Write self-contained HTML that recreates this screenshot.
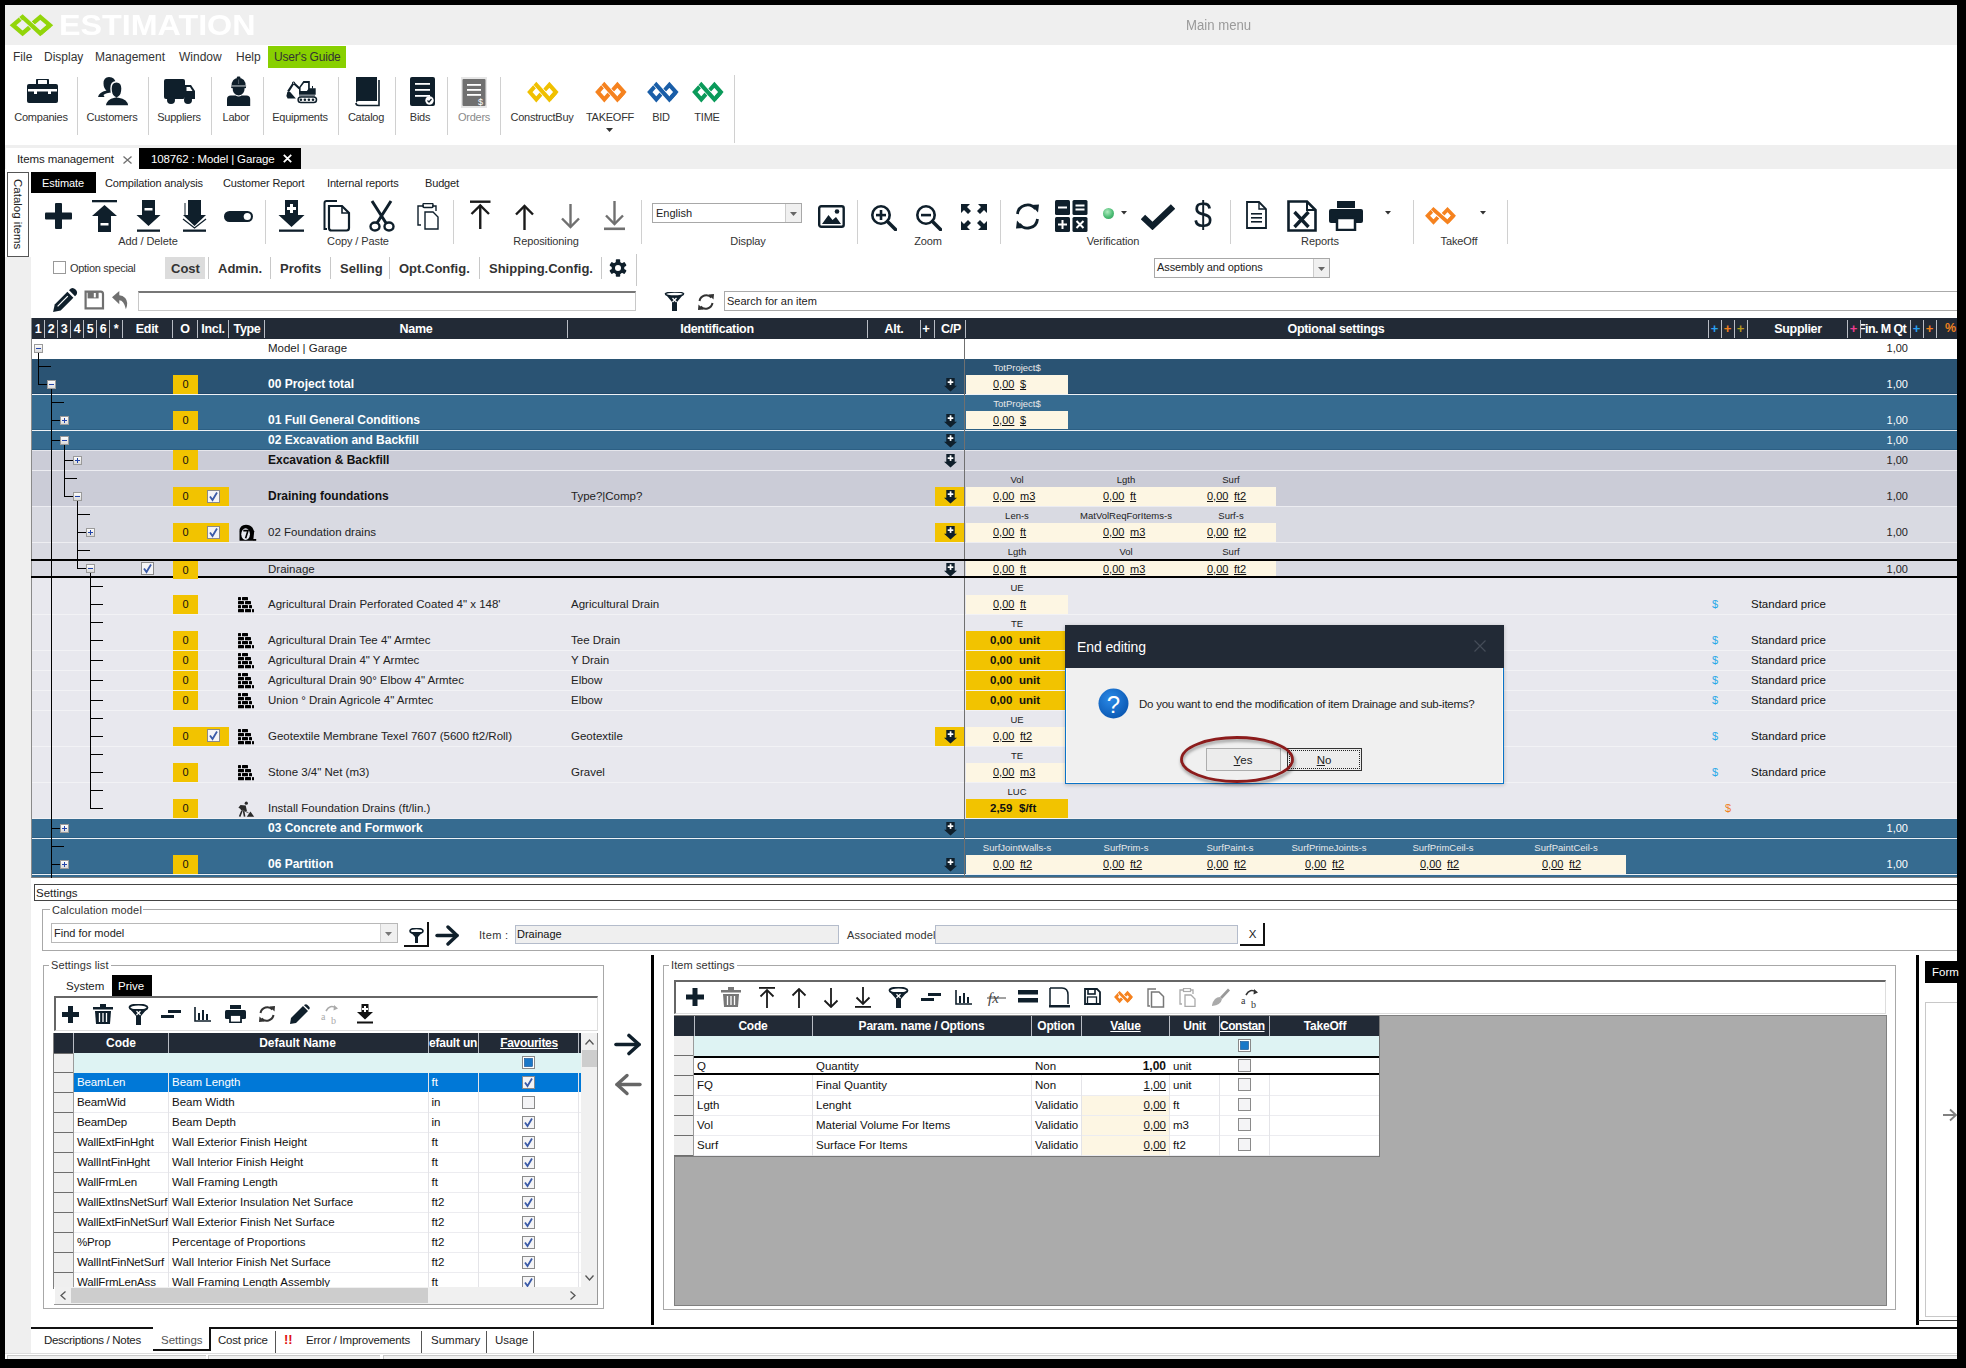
<!DOCTYPE html><html><head><meta charset="utf-8"><style>
html,body{margin:0;padding:0;}
body{width:1966px;height:1368px;background:#000;position:relative;overflow:hidden;font-family:"Liberation Sans",sans-serif;}
div,svg,span{position:absolute;box-sizing:border-box;}
u{text-decoration:underline;}
</style></head><body>
<div style="left:5px;top:5px;width:1952px;height:1354px;background:#fff;"></div>
<div style="left:5px;top:5px;width:1952px;height:40px;background:#efefef;"></div>
<svg style="left:7.700000000000001px;top:11.900000000000002px;" width="46.9" height="26.4" viewBox="0 0 46.9 26.4"><polyline points="12.20,7.06 5.01,13.20 14.60,21.39 21.79,15.25" stroke="#92d50a" stroke-width="4.3" stroke-linejoin="miter" stroke-miterlimit="10" fill="none"/><polyline points="32.30,21.39 41.89,13.20 32.30,5.01 25.11,11.15" stroke="#92d50a" stroke-width="4.3" stroke-linejoin="miter" stroke-miterlimit="10" fill="none"/><polyline points="12.68,6.65 14.60,5.01 32.30,21.39 34.22,19.75" stroke="#efefef" stroke-width="5.699999999999999" stroke-linejoin="miter" stroke-miterlimit="10" fill="none"/><polyline points="12.68,6.65 14.60,5.01 32.30,21.39 34.22,19.75" stroke="#92d50a" stroke-width="4.3" stroke-linejoin="miter" stroke-miterlimit="10" fill="none"/><polyline points="32.30,21.39 41.89,13.20" stroke="#92d50a" stroke-width="4.3" stroke-linejoin="miter" stroke-miterlimit="10" fill="none"/></svg>
<div style="left:59px;top:8px;height:34px;line-height:34px;font-size:30px;font-weight:bold;color:#fff;white-space:nowrap;transform:scaleX(1.075);transform-origin:0 0;">ESTIMATION</div>
<div style="left:1186px;top:15.5px;height:19px;line-height:19px;font-size:14px;color:#9a9a9a;font-weight:normal;white-space:nowrap;transform:scaleX(0.94);transform-origin:0 50%;">Main menu</div>
<div style="left:268px;top:46px;width:78px;height:22px;background:#88d000;"></div>
<div style="left:13px;top:49.0px;height:16px;line-height:16px;font-size:12px;color:#333;font-weight:normal;white-space:nowrap;">File</div>
<div style="left:44px;top:49.0px;height:16px;line-height:16px;font-size:12px;color:#333;font-weight:normal;white-space:nowrap;">Display</div>
<div style="left:95px;top:49.0px;height:16px;line-height:16px;font-size:12px;color:#333;font-weight:normal;white-space:nowrap;">Management</div>
<div style="left:179px;top:49.0px;height:16px;line-height:16px;font-size:12px;color:#333;font-weight:normal;white-space:nowrap;">Window</div>
<div style="left:236px;top:49.0px;height:16px;line-height:16px;font-size:12px;color:#333;font-weight:normal;white-space:nowrap;">Help</div>
<div style="left:274px;top:49.0px;height:16px;line-height:16px;font-size:12px;color:#333;font-weight:normal;white-space:nowrap;letter-spacing:-0.2px;">User's Guide</div>
<div style="left:77px;top:77px;width:1px;height:58px;background:#d0d0d0;"></div>
<div style="left:148px;top:77px;width:1px;height:58px;background:#d0d0d0;"></div>
<div style="left:211px;top:77px;width:1px;height:58px;background:#d0d0d0;"></div>
<div style="left:263px;top:77px;width:1px;height:58px;background:#d0d0d0;"></div>
<div style="left:338px;top:77px;width:1px;height:58px;background:#d0d0d0;"></div>
<div style="left:395px;top:77px;width:1px;height:58px;background:#d0d0d0;"></div>
<div style="left:447px;top:77px;width:1px;height:58px;background:#d0d0d0;"></div>
<div style="left:500px;top:77px;width:1px;height:58px;background:#d0d0d0;"></div>
<div style="left:734px;top:75px;width:1px;height:68px;background:#d0d0d0;"></div>
<div style="left:-19.0px;top:109.9px;width:120px;text-align:center;height:15px;line-height:15px;font-size:11px;color:#333;font-weight:normal;white-space:nowrap;letter-spacing:-0.25px;">Companies</div>
<div style="left:52.0px;top:109.9px;width:120px;text-align:center;height:15px;line-height:15px;font-size:11px;color:#333;font-weight:normal;white-space:nowrap;letter-spacing:-0.25px;">Customers</div>
<div style="left:119.0px;top:109.9px;width:120px;text-align:center;height:15px;line-height:15px;font-size:11px;color:#333;font-weight:normal;white-space:nowrap;letter-spacing:-0.25px;">Suppliers</div>
<div style="left:176.0px;top:109.9px;width:120px;text-align:center;height:15px;line-height:15px;font-size:11px;color:#333;font-weight:normal;white-space:nowrap;letter-spacing:-0.25px;">Labor</div>
<div style="left:240.0px;top:109.9px;width:120px;text-align:center;height:15px;line-height:15px;font-size:11px;color:#333;font-weight:normal;white-space:nowrap;letter-spacing:-0.25px;">Equipments</div>
<div style="left:306.0px;top:109.9px;width:120px;text-align:center;height:15px;line-height:15px;font-size:11px;color:#333;font-weight:normal;white-space:nowrap;letter-spacing:-0.25px;">Catalog</div>
<div style="left:360.0px;top:109.9px;width:120px;text-align:center;height:15px;line-height:15px;font-size:11px;color:#333;font-weight:normal;white-space:nowrap;letter-spacing:-0.25px;">Bids</div>
<div style="left:414.0px;top:109.9px;width:120px;text-align:center;height:15px;line-height:15px;font-size:11px;color:#8a8a8a;font-weight:normal;white-space:nowrap;letter-spacing:-0.25px;">Orders</div>
<div style="left:482.0px;top:109.9px;width:120px;text-align:center;height:15px;line-height:15px;font-size:11px;color:#333;font-weight:normal;white-space:nowrap;letter-spacing:-0.25px;">ConstructBuy</div>
<div style="left:550.0px;top:109.9px;width:120px;text-align:center;height:15px;line-height:15px;font-size:11px;color:#333;font-weight:normal;white-space:nowrap;letter-spacing:-0.25px;">TAKEOFF</div>
<div style="left:601.0px;top:109.9px;width:120px;text-align:center;height:15px;line-height:15px;font-size:11px;color:#333;font-weight:normal;white-space:nowrap;letter-spacing:-0.25px;">BID</div>
<div style="left:647.0px;top:109.9px;width:120px;text-align:center;height:15px;line-height:15px;font-size:11px;color:#333;font-weight:normal;white-space:nowrap;letter-spacing:-0.25px;">TIME</div>
<svg style="left:27px;top:79px;" width="32" height="25" viewBox="0 0 32 25"><rect x="0" y="5" width="31" height="19" rx="2" fill="#0f1f2b"/><rect x="10" y="0" width="11" height="6" rx="1.5" fill="none" stroke="#0f1f2b" stroke-width="2"/><rect x="1" y="10" width="29" height="2.5" fill="#fff"/><rect x="7" y="10" width="3" height="5" fill="#fff"/><rect x="21" y="10" width="3" height="5" fill="#fff"/></svg>
<svg style="left:97px;top:76px;" width="34" height="30" viewBox="0 0 34 30"><path d="M12 1 Q18.5 1 18.5 7.5 Q18 13 15 15.5 L15 16.5 Q9 16.5 6.5 19 L7.5 21 L1 21 Q2 16 9.5 14.5 Q6.5 12 6.5 7.5 Q6.5 1 12 1Z" fill="#0f1f2b"/><path d="M19.5 5.8 Q25 5.8 25 12.5 Q25 19 21.5 21 Q31.5 22.5 32 30 L8 30 Q9 22.5 17.5 21 Q14 19 14 12.5 Q14 5.8 19.5 5.8Z" fill="#0f1f2b" stroke="#fff" stroke-width="1.4"/></svg>
<svg style="left:164px;top:79px;" width="32" height="26" viewBox="0 0 32 26"><rect x="0" y="0" width="21" height="20" rx="2" fill="#0f1f2b"/><path d="M21 6 L27 6 L31 12 L31 20 L21 20Z" fill="#0f1f2b"/><path d="M22.5 8 L26 8 L28.5 12 L22.5 12Z" fill="#fff"/><circle cx="7" cy="21" r="4" fill="#0f1f2b"/><circle cx="24" cy="21" r="4" fill="#0f1f2b"/></svg>
<svg style="left:226px;top:76px;" width="25" height="31" viewBox="0 0 25 31"><path d="M5.6 10 Q5.6 2.2 12.6 1.8 Q19.6 2.2 19.6 10 Z" fill="#0f1f2b"/><rect x="10.8" y="0.6" width="3.6" height="2.4" rx="1" fill="#0f1f2b"/><path d="M12.6 3.5 L12.6 8" stroke="#5d6872" stroke-width="0.9"/><rect x="5" y="9.2" width="15.2" height="1.3" fill="#8f989f"/><rect x="5.2" y="10.5" width="14.8" height="1.6" fill="#0f1f2b"/><path d="M6.6 12 L18.6 12 Q18.6 19 12.6 19.4 Q6.6 19 6.6 12Z" fill="#0f1f2b"/><path d="M1 30 L1 23.2 Q1 19.6 4.8 19.6 L9.6 19.6 Q12.6 21.6 15.6 19.6 L20.4 19.6 Q24.2 19.6 24.2 23.2 L24.2 30Z" fill="#0f1f2b"/></svg>
<svg style="left:280px;top:72px;" width="40" height="34" viewBox="0 0 40 34"><path d="M19 15.2 L23.4 9.1 L29.8 9.1 L29.8 16.2 L35.7 16.2 L35.7 22.8 L19 22.8Z M20.6 15.4 L20.6 19 L26.9 19 L28.1 17.3 L28.1 11 L24 11Z" fill="#0f1f2b" fill-rule="evenodd"/><path d="M19.5 16.5 L13.6 11 L8.1 19.6" fill="none" stroke="#0f1f2b" stroke-width="2.2" stroke-linejoin="round"/><circle cx="13.6" cy="11.1" r="1.6" fill="#0f1f2b"/><circle cx="13.6" cy="11.1" r="0.7" fill="#fff"/><path d="M6.4 24 L7.3 19.9 L10.2 19.9 L15.9 26.5 L7.6 26.6Z" fill="#0f1f2b"/><rect x="19" y="23.2" width="16" height="1.3" fill="#5a6570"/><rect x="18.1" y="25" width="18.4" height="5.6" rx="2.8" fill="none" stroke="#0f1f2b" stroke-width="1.5"/><circle cx="20.9" cy="27.8" r="1.3" fill="#0f1f2b"/><circle cx="24.9" cy="27.8" r="1.3" fill="#0f1f2b"/><circle cx="28.9" cy="27.8" r="1.3" fill="#0f1f2b"/><circle cx="33" cy="27.8" r="1.3" fill="#0f1f2b"/><rect x="32" y="14" width="1" height="2.5" fill="#0f1f2b"/></svg>
<svg style="left:354px;top:77px;" width="26" height="30" viewBox="0 0 26 30"><path d="M2 0 L23 0 L23 24 L5 24 Q2 24 2 27 Z" fill="#0f1f2b"/><path d="M2 26 Q2 28.5 5 28.5 L25 28.5 L25 3" fill="none" stroke="#0f1f2b" stroke-width="1.6"/></svg>
<svg style="left:410px;top:77px;" width="26" height="30" viewBox="0 0 26 30"><rect x="0" y="0" width="25" height="29" rx="2" fill="#0f1f2b"/><rect x="5" y="6" width="15" height="1.8" fill="#fff"/><rect x="5" y="12" width="15" height="1.8" fill="#fff"/><rect x="5" y="18" width="15" height="1.8" fill="#fff"/><circle cx="19.5" cy="23.5" r="4.2" fill="#fff"/><path d="M17.5 23.5 L19 25 L21.5 22" stroke="#0f1f2b" stroke-width="1.2" fill="none"/></svg>
<svg style="left:461px;top:76.5px;" width="26" height="32" viewBox="0 0 26 32"><rect x="0" y="0" width="26" height="31" fill="#e6e6e6"/><rect x="1.5" y="2" width="23" height="27" rx="1" fill="#707070"/><rect x="6" y="7" width="14" height="1.8" fill="#fff"/><rect x="6" y="12" width="14" height="1.8" fill="#fff"/><rect x="6" y="17" width="14" height="1.8" fill="#fff"/><text x="17" y="28" font-size="9" fill="#fff" font-family="Liberation Sans">$</text></svg>
<svg style="left:525.3000000000001px;top:79.80000000000001px;" width="35.7" height="24.2" viewBox="0 0 35.7 24.2"><polyline points="9.67,6.62 4.80,12.10 11.30,19.40 16.17,13.92" stroke="#f0c000" stroke-width="4.0" stroke-linejoin="miter" stroke-miterlimit="10" fill="none"/><polyline points="24.40,19.40 30.90,12.10 24.40,4.80 19.52,10.27" stroke="#f0c000" stroke-width="4.0" stroke-linejoin="miter" stroke-miterlimit="10" fill="none"/><polyline points="10.00,6.26 11.30,4.80 24.40,19.40 25.70,17.94" stroke="#fff" stroke-width="5.4" stroke-linejoin="miter" stroke-miterlimit="10" fill="none"/><polyline points="10.00,6.26 11.30,4.80 24.40,19.40 25.70,17.94" stroke="#f0c000" stroke-width="4.0" stroke-linejoin="miter" stroke-miterlimit="10" fill="none"/><polyline points="24.40,19.40 30.90,12.10" stroke="#f0c000" stroke-width="4.0" stroke-linejoin="miter" stroke-miterlimit="10" fill="none"/></svg>
<svg style="left:593.2px;top:79.80000000000001px;" width="35.7" height="24.2" viewBox="0 0 35.7 24.2"><polyline points="9.67,6.62 4.80,12.10 11.30,19.40 16.17,13.92" stroke="#f5821f" stroke-width="4.0" stroke-linejoin="miter" stroke-miterlimit="10" fill="none"/><polyline points="24.40,19.40 30.90,12.10 24.40,4.80 19.52,10.27" stroke="#f5821f" stroke-width="4.0" stroke-linejoin="miter" stroke-miterlimit="10" fill="none"/><polyline points="10.00,6.26 11.30,4.80 24.40,19.40 25.70,17.94" stroke="#fff" stroke-width="5.4" stroke-linejoin="miter" stroke-miterlimit="10" fill="none"/><polyline points="10.00,6.26 11.30,4.80 24.40,19.40 25.70,17.94" stroke="#f5821f" stroke-width="4.0" stroke-linejoin="miter" stroke-miterlimit="10" fill="none"/><polyline points="24.40,19.40 30.90,12.10" stroke="#f5821f" stroke-width="4.0" stroke-linejoin="miter" stroke-miterlimit="10" fill="none"/></svg>
<svg style="left:645.0px;top:79.80000000000001px;" width="35.7" height="24.2" viewBox="0 0 35.7 24.2"><polyline points="9.67,6.62 4.80,12.10 11.30,19.40 16.17,13.92" stroke="#1a5ea8" stroke-width="4.0" stroke-linejoin="miter" stroke-miterlimit="10" fill="none"/><polyline points="24.40,19.40 30.90,12.10 24.40,4.80 19.52,10.27" stroke="#1a5ea8" stroke-width="4.0" stroke-linejoin="miter" stroke-miterlimit="10" fill="none"/><polyline points="10.00,6.26 11.30,4.80 24.40,19.40 25.70,17.94" stroke="#fff" stroke-width="5.4" stroke-linejoin="miter" stroke-miterlimit="10" fill="none"/><polyline points="10.00,6.26 11.30,4.80 24.40,19.40 25.70,17.94" stroke="#1a5ea8" stroke-width="4.0" stroke-linejoin="miter" stroke-miterlimit="10" fill="none"/><polyline points="24.40,19.40 30.90,12.10" stroke="#1a5ea8" stroke-width="4.0" stroke-linejoin="miter" stroke-miterlimit="10" fill="none"/></svg>
<svg style="left:690.1px;top:79.80000000000001px;" width="35.7" height="24.2" viewBox="0 0 35.7 24.2"><polyline points="9.67,6.62 4.80,12.10 11.30,19.40 16.17,13.92" stroke="#0a9a5a" stroke-width="4.0" stroke-linejoin="miter" stroke-miterlimit="10" fill="none"/><polyline points="24.40,19.40 30.90,12.10 24.40,4.80 19.52,10.27" stroke="#0a9a5a" stroke-width="4.0" stroke-linejoin="miter" stroke-miterlimit="10" fill="none"/><polyline points="10.00,6.26 11.30,4.80 24.40,19.40 25.70,17.94" stroke="#fff" stroke-width="5.4" stroke-linejoin="miter" stroke-miterlimit="10" fill="none"/><polyline points="10.00,6.26 11.30,4.80 24.40,19.40 25.70,17.94" stroke="#0a9a5a" stroke-width="4.0" stroke-linejoin="miter" stroke-miterlimit="10" fill="none"/><polyline points="24.40,19.40 30.90,12.10" stroke="#0a9a5a" stroke-width="4.0" stroke-linejoin="miter" stroke-miterlimit="10" fill="none"/></svg>
<svg style="left:606px;top:128px;" width="7" height="4" viewBox="0 0 7 4"><path d="M0 0 L7 0 L3.5 4Z" fill="#333"/></svg>
<div style="left:5px;top:145px;width:1952px;height:24px;background:#efefef;"></div>
<div style="left:6px;top:148px;width:133px;height:21px;background:#fff;"></div>
<div style="left:17px;top:151.0px;height:16px;line-height:16px;font-size:11.5px;color:#222;font-weight:normal;white-space:nowrap;letter-spacing:-0.1px;">Items management</div>
<svg style="left:123px;top:156px;" width="9" height="8" viewBox="0 0 9 8"><path d="M0.5 0.5 L8.5 7.5 M8.5 0.5 L0.5 7.5" stroke="#707070" stroke-width="1.3"/></svg>
<div style="left:139px;top:148px;width:162px;height:21px;background:#000;"></div>
<div style="left:151px;top:151.0px;height:16px;line-height:16px;font-size:11.5px;color:#fff;font-weight:normal;white-space:nowrap;letter-spacing:-0.15px;">108762 : Model | Garage</div>
<svg style="left:283px;top:154px;" width="9" height="9" viewBox="0 0 9 9"><path d="M0.8 0.8 L8.2 8.2 M8.2 0.8 L0.8 8.2" stroke="#fff" stroke-width="1.8"/></svg>
<div style="left:5px;top:257px;width:26px;height:1096px;background:#efefef;"></div>
<div style="left:7px;top:172px;width:22px;height:85px;background:#fff;border:1px solid #555;"></div>
<div style="left:8px;top:174px;width:20px;height:80px;"><div style="left:0;top:0;width:80px;height:20px;line-height:20px;font-size:11.5px;color:#222;white-space:nowrap;transform-origin:0 0;transform:translate(20px,5px) rotate(90deg);">Catalog items</div></div>
<div style="left:31px;top:172px;width:65px;height:21px;background:#000;"></div>
<div style="left:42px;top:175.5px;height:15px;line-height:15px;font-size:11px;color:#fff;font-weight:normal;white-space:nowrap;letter-spacing:-0.1px;">Estimate</div>
<div style="left:105px;top:175.5px;height:15px;line-height:15px;font-size:11px;color:#222;font-weight:normal;white-space:nowrap;letter-spacing:-0.15px;">Compilation analysis</div>
<div style="left:223px;top:175.5px;height:15px;line-height:15px;font-size:11px;color:#222;font-weight:normal;white-space:nowrap;letter-spacing:-0.15px;">Customer Report</div>
<div style="left:327px;top:175.5px;height:15px;line-height:15px;font-size:11px;color:#222;font-weight:normal;white-space:nowrap;letter-spacing:-0.15px;">Internal reports</div>
<div style="left:425px;top:175.5px;height:15px;line-height:15px;font-size:11px;color:#222;font-weight:normal;white-space:nowrap;letter-spacing:-0.15px;">Budget</div>
<div style="left:265px;top:200px;width:1px;height:44px;background:#d0d0d0;"></div>
<div style="left:453px;top:200px;width:1px;height:44px;background:#d0d0d0;"></div>
<div style="left:641px;top:200px;width:1px;height:44px;background:#d0d0d0;"></div>
<div style="left:857px;top:200px;width:1px;height:44px;background:#d0d0d0;"></div>
<div style="left:1000px;top:200px;width:1px;height:44px;background:#d0d0d0;"></div>
<div style="left:1230px;top:200px;width:1px;height:44px;background:#d0d0d0;"></div>
<div style="left:1413px;top:200px;width:1px;height:44px;background:#d0d0d0;"></div>
<div style="left:1507px;top:200px;width:1px;height:44px;background:#d0d0d0;"></div>
<div style="left:78.0px;top:233.5px;width:140px;text-align:center;height:15px;line-height:15px;font-size:11px;color:#333;font-weight:normal;white-space:nowrap;letter-spacing:-0.1px;">Add / Delete</div>
<div style="left:288.0px;top:233.5px;width:140px;text-align:center;height:15px;line-height:15px;font-size:11px;color:#333;font-weight:normal;white-space:nowrap;letter-spacing:-0.1px;">Copy / Paste</div>
<div style="left:476.0px;top:233.5px;width:140px;text-align:center;height:15px;line-height:15px;font-size:11px;color:#333;font-weight:normal;white-space:nowrap;letter-spacing:-0.1px;">Repositioning</div>
<div style="left:678.0px;top:233.5px;width:140px;text-align:center;height:15px;line-height:15px;font-size:11px;color:#333;font-weight:normal;white-space:nowrap;letter-spacing:-0.1px;">Display</div>
<div style="left:858.0px;top:233.5px;width:140px;text-align:center;height:15px;line-height:15px;font-size:11px;color:#333;font-weight:normal;white-space:nowrap;letter-spacing:-0.1px;">Zoom</div>
<div style="left:1043.0px;top:233.5px;width:140px;text-align:center;height:15px;line-height:15px;font-size:11px;color:#333;font-weight:normal;white-space:nowrap;letter-spacing:-0.1px;">Verification</div>
<div style="left:1250.0px;top:233.5px;width:140px;text-align:center;height:15px;line-height:15px;font-size:11px;color:#333;font-weight:normal;white-space:nowrap;letter-spacing:-0.1px;">Reports</div>
<div style="left:1389.0px;top:233.5px;width:140px;text-align:center;height:15px;line-height:15px;font-size:11px;color:#333;font-weight:normal;white-space:nowrap;letter-spacing:-0.1px;">TakeOff</div>
<svg style="left:45px;top:203px;" width="27" height="26" viewBox="0 0 27 26"><rect x="0" y="9.5" width="27" height="7" rx="1" fill="#0f1f2b"/><rect x="10" y="0" width="7" height="26" rx="1" fill="#0f1f2b"/></svg>
<svg style="left:92px;top:200px;" width="25" height="32" viewBox="0 0 25 32"><rect x="0" y="0" width="25" height="2.3" fill="#0f1f2b"/><path d="M12.5 5 L25 16 L19 16 L19 32 L6 32 L6 16 L0 16Z" fill="#0f1f2b"/><rect x="8.5" y="23" width="8" height="2.5" fill="#fff"/></svg>
<svg style="left:136px;top:200px;" width="25" height="32" viewBox="0 0 25 32"><path d="M6 0 L19 0 L19 15 L24.5 15 L12.5 26 L0.5 15 L6 15Z" fill="#0f1f2b"/><rect x="8.5" y="8" width="8" height="2.5" fill="#fff"/><rect x="1" y="29.5" width="23" height="2.3" fill="#0f1f2b"/></svg>
<svg style="left:182px;top:200px;" width="25" height="32" viewBox="0 0 25 32"><path d="M6 0 L19 0 L19 15 L24 15 L12.5 26 L1 15 L6 15Z" fill="#0f1f2b"/><path d="M1 19 L12.5 28 L24 19" fill="none" stroke="#0f1f2b" stroke-width="1.3"/><path d="M3 3 L3 16" stroke="#0f1f2b" stroke-width="1"/><rect x="1" y="29.5" width="23" height="2.3" fill="#0f1f2b"/></svg>
<svg style="left:224px;top:211px;" width="30" height="12" viewBox="0 0 30 12"><rect x="0" y="0" width="29" height="11" rx="5.5" fill="#0f1f2b"/><circle cx="23.3" cy="5.5" r="3.6" fill="#fff"/></svg>
<svg style="left:278px;top:200px;" width="27" height="32" viewBox="0 0 27 32"><path d="M7 0 L20 0 L20 15 L26.5 15 L13.5 27 L0.5 15 L7 15Z" fill="#0f1f2b"/><rect x="12" y="4" width="3" height="9" fill="#fff"/><rect x="9" y="7" width="9" height="3" fill="#fff"/><rect x="1" y="29.5" width="25" height="2.3" fill="#0f1f2b"/></svg>
<svg style="left:323px;top:200px;" width="28" height="32" viewBox="0 0 28 32"><path d="M4 29 L1.5 29 L1.5 3 Q1.5 1 3.5 1 L14 1" fill="none" stroke="#0f1f2b" stroke-width="2"/><path d="M6 6 L19 6 L26 13 L26 28 Q26 30.5 23.5 30.5 L8.5 30.5 Q6 30.5 6 28Z" fill="none" stroke="#0f1f2b" stroke-width="2.2"/><path d="M19 6 L19 13 L26 13" fill="none" stroke="#0f1f2b" stroke-width="1.6"/></svg>
<svg style="left:368px;top:200px;" width="28" height="32" viewBox="0 0 28 32"><path d="M4 1 L18 23 M23 1 L9 23" stroke="#0f1f2b" stroke-width="3" fill="none"/><ellipse cx="7" cy="26.5" rx="4.5" ry="4" fill="none" stroke="#0f1f2b" stroke-width="2.4"/><ellipse cx="21" cy="26.5" rx="4.5" ry="4" fill="none" stroke="#0f1f2b" stroke-width="2.4"/></svg>
<svg style="left:417px;top:203px;" width="23" height="27" viewBox="0 0 23 27"><path d="M4 22 L1 22 L1 3 L7 3 M15 3 L19 3 L19 8" fill="none" stroke="#0f1f2b" stroke-width="1.4"/><rect x="6" y="0.5" width="10" height="4" rx="1" fill="none" stroke="#0f1f2b" stroke-width="1.4"/><path d="M8 9 L16 9 L21 14 L21 26 L8 26Z" fill="none" stroke="#0f1f2b" stroke-width="1.4"/></svg>
<svg style="left:470px;top:200px;" width="21" height="30" viewBox="0 0 21 30"><rect x="0" y="0.5" width="20.5" height="2.4" fill="#1a1a1a"/><path d="M10.25 5 L10.25 29" stroke="#1a1a1a" stroke-width="2.4"/><path d="M1.5 14 L10.25 5.5 L19 14" fill="none" stroke="#1a1a1a" stroke-width="2.4"/></svg>
<svg style="left:515px;top:204px;" width="20" height="26" viewBox="0 0 20 26"><path d="M9.5 2 L9.5 26" stroke="#1a1a1a" stroke-width="2.4"/><path d="M1 10.5 L9.5 2 L18 10.5" fill="none" stroke="#1a1a1a" stroke-width="2.4"/></svg>
<svg style="left:561px;top:204px;" width="20" height="26" viewBox="0 0 20 26"><path d="M9.5 0 L9.5 23" stroke="#707070" stroke-width="2.4"/><path d="M1 14.5 L9.5 23 L18 14.5" fill="none" stroke="#707070" stroke-width="2.4"/></svg>
<svg style="left:604px;top:201px;" width="22" height="30" viewBox="0 0 22 30"><path d="M10.5 0 L10.5 23" stroke="#707070" stroke-width="2.4"/><path d="M2 14.5 L10.5 23 L19 14.5" fill="none" stroke="#707070" stroke-width="2.4"/><rect x="0" y="26.5" width="21" height="2.6" fill="#707070"/></svg>
<div style="left:652px;top:203px;width:150px;height:20px;background:#fff;border:1px solid #a8a8a8;"></div>
<div style="left:785px;top:204px;width:16px;height:18px;background:#f0f0f0;border-left:1px solid #ccc;"></div>
<svg style="left:790px;top:212px;" width="7" height="4" viewBox="0 0 7 4"><path d="M0 0 L7 0 L3.5 4Z" fill="#666"/></svg>
<div style="left:656px;top:205.5px;height:15px;line-height:15px;font-size:11px;color:#222;font-weight:normal;white-space:nowrap;">English</div>
<svg style="left:818px;top:205px;" width="27" height="23" viewBox="0 0 27 23"><rect x="1.2" y="1.2" width="24.5" height="20.5" rx="2" fill="none" stroke="#0f1f2b" stroke-width="2.4"/><path d="M4 19 L10.5 10 L14.5 15 L18 12 L23 19Z" fill="#0f1f2b"/><circle cx="19" cy="6.5" r="2.3" fill="#0f1f2b"/></svg>
<svg style="left:870px;top:204px;" width="27" height="27" viewBox="0 0 27 27"><circle cx="11" cy="11" r="8.7" fill="none" stroke="#0f1f2b" stroke-width="2.6"/><path d="M17.5 17.5 L25.5 25.5" stroke="#0f1f2b" stroke-width="3.6" stroke-linecap="round"/><rect x="6" y="9.8" width="10" height="2.6" fill="#0f1f2b"/><rect x="9.7" y="6" width="2.6" height="10" fill="#0f1f2b"/></svg>
<svg style="left:915px;top:204px;" width="27" height="27" viewBox="0 0 27 27"><circle cx="11" cy="11" r="8.7" fill="none" stroke="#0f1f2b" stroke-width="2.6"/><path d="M17.5 17.5 L25.5 25.5" stroke="#0f1f2b" stroke-width="3.6" stroke-linecap="round"/><rect x="6" y="9.8" width="10" height="2.6" fill="#0f1f2b"/></svg>
<svg style="left:961px;top:204px;" width="27" height="26" viewBox="0 0 27 26"><g fill="#0f1f2b"><path d="M0 0 L9 0 L6 3 L10 7 L7 10 L3 6 L0 9Z"/><path d="M26 0 L17 0 L20 3 L16 7 L19 10 L23 6 L26 9Z"/><path d="M0 26 L9 26 L6 23 L10 19 L7 16 L3 20 L0 17Z"/><path d="M26 26 L17 26 L20 23 L16 19 L19 16 L23 20 L26 17Z"/></g></svg>
<svg style="left:1014px;top:203px;" width="27" height="27" viewBox="0 0 27 27"><path d="M3.5 11 A10 10 0 0 1 21.5 6" fill="none" stroke="#0f1f2b" stroke-width="2.8"/><path d="M17 2 L25 1.5 L24 9.5Z" fill="#0f1f2b"/><path d="M23.5 16 A10 10 0 0 1 5.5 21" fill="none" stroke="#0f1f2b" stroke-width="2.8"/><path d="M10 25 L2 25.5 L3 17.5Z" fill="#0f1f2b"/></svg>
<svg style="left:1055px;top:200px;" width="33" height="32" viewBox="0 0 33 32"><rect x="0" y="0" width="15" height="15" rx="1.5" fill="#0f1f2b"/><rect x="17.5" y="0" width="15" height="15" rx="1.5" fill="#0f1f2b"/><rect x="0" y="17" width="15" height="15" rx="1.5" fill="#0f1f2b"/><rect x="17.5" y="17" width="15" height="15" rx="1.5" fill="#0f1f2b"/><rect x="3" y="6.5" width="9" height="2" fill="#fff"/><rect x="20.5" y="4.5" width="9" height="2" fill="#fff"/><rect x="20.5" y="8.5" width="9" height="2" fill="#fff"/><rect x="3" y="23.5" width="9" height="2" fill="#fff"/><rect x="6.5" y="20" width="2" height="9" fill="#fff"/><path d="M21.5 21 L28.5 28 M28.5 21 L21.5 28" stroke="#fff" stroke-width="2"/></svg>
<div style="left:1103px;top:208px;width:11px;height:11px;border-radius:50%;background:radial-gradient(circle at 40% 35%,#b0ecc0,#4cbc74 55%,#2e9a58);"></div>
<svg style="left:1121px;top:211px;" width="6" height="4" viewBox="0 0 6 4"><path d="M0 0 L6 0 L3 3.5Z" fill="#333"/></svg>
<svg style="left:1141px;top:203px;" width="34" height="27" viewBox="0 0 34 27"><path d="M2 14 L11.5 23 L32 3.5" fill="none" stroke="#0f1f2b" stroke-width="6.2"/></svg>
<div style="left:1193px;top:191.0px;height:50px;line-height:50px;font-size:36px;color:#0f1f2b;font-weight:normal;white-space:nowrap;transform:scaleX(0.9);">$</div>
<svg style="left:1246px;top:201px;" width="21" height="28" viewBox="0 0 21 28"><path d="M1 1 L13 1 L20 8 L20 27 L1 27Z" fill="none" stroke="#0f1f2b" stroke-width="1.8"/><path d="M13 1 L13 8 L20 8" fill="none" stroke="#0f1f2b" stroke-width="1.4"/><rect x="5" y="12" width="11" height="1.6" fill="#0f1f2b"/><rect x="5" y="16" width="11" height="1.6" fill="#0f1f2b"/><rect x="5" y="20" width="11" height="1.6" fill="#0f1f2b"/></svg>
<svg style="left:1287px;top:200px;" width="30" height="32" viewBox="0 0 30 32"><path d="M1.5 1.5 L20 1.5 L28.5 10 L28.5 30.5 L1.5 30.5Z" fill="none" stroke="#0f1f2b" stroke-width="2.6"/><path d="M20 1.5 L20 10 L28.5 10" fill="none" stroke="#0f1f2b" stroke-width="2"/><path d="M7.5 12 L21.5 27 M21.5 12 L7.5 27" stroke="#0f1f2b" stroke-width="3.4"/></svg>
<svg style="left:1329px;top:201px;" width="34" height="30" viewBox="0 0 34 30"><rect x="8" y="0" width="18" height="7" fill="#0f1f2b"/><rect x="0" y="8" width="34" height="14" rx="2" fill="#0f1f2b"/><rect x="8" y="17" width="18" height="12" fill="#fff" stroke="#0f1f2b" stroke-width="2.5"/></svg>
<svg style="left:1385px;top:211px;" width="6" height="4" viewBox="0 0 6 4"><path d="M0 0 L6 0 L3 3.5Z" fill="#333"/></svg>
<svg style="left:1422.5px;top:205.0px;" width="35.0" height="21.6" viewBox="0 0 35.0 21.6"><polyline points="9.02,6.14 4.59,10.80 10.50,17.01 14.93,12.35" stroke="#f5821f" stroke-width="3.7" stroke-linejoin="miter" stroke-miterlimit="10" fill="none"/><polyline points="24.50,17.01 30.41,10.80 24.50,4.59 20.07,9.25" stroke="#f5821f" stroke-width="3.7" stroke-linejoin="miter" stroke-miterlimit="10" fill="none"/><polyline points="9.32,5.83 10.50,4.59 24.50,17.01 25.68,15.77" stroke="#fff" stroke-width="5.1" stroke-linejoin="miter" stroke-miterlimit="10" fill="none"/><polyline points="9.32,5.83 10.50,4.59 24.50,17.01 25.68,15.77" stroke="#f5821f" stroke-width="3.7" stroke-linejoin="miter" stroke-miterlimit="10" fill="none"/><polyline points="24.50,17.01 30.41,10.80" stroke="#f5821f" stroke-width="3.7" stroke-linejoin="miter" stroke-miterlimit="10" fill="none"/></svg>
<svg style="left:1480px;top:211px;" width="6" height="4" viewBox="0 0 6 4"><path d="M0 0 L6 0 L3 3.5Z" fill="#333"/></svg>
<div style="left:53px;top:261px;width:13px;height:13px;background:#fff;border:1px solid #999;"></div>
<div style="left:70px;top:260.5px;height:15px;line-height:15px;font-size:11px;color:#333;font-weight:normal;white-space:nowrap;letter-spacing:-0.3px;">Option special</div>
<div style="left:165px;top:257px;width:40px;height:22px;background:#dcdcdc;"></div>
<div style="left:171px;top:260.0px;height:18px;line-height:18px;font-size:13px;color:#333;font-weight:bold;white-space:nowrap;">Cost</div>
<div style="left:218px;top:260.0px;height:18px;line-height:18px;font-size:13px;color:#333;font-weight:bold;white-space:nowrap;">Admin.</div>
<div style="left:280px;top:260.0px;height:18px;line-height:18px;font-size:13px;color:#333;font-weight:bold;white-space:nowrap;">Profits</div>
<div style="left:340px;top:260.0px;height:18px;line-height:18px;font-size:13px;color:#333;font-weight:bold;white-space:nowrap;">Selling</div>
<div style="left:399px;top:260.0px;height:18px;line-height:18px;font-size:13px;color:#333;font-weight:bold;white-space:nowrap;">Opt.Config.</div>
<div style="left:489px;top:260.0px;height:18px;line-height:18px;font-size:13px;color:#333;font-weight:bold;white-space:nowrap;">Shipping.Config.</div>
<div style="left:208px;top:257px;width:1px;height:22px;background:#c8c8c8;"></div>
<div style="left:270px;top:257px;width:1px;height:22px;background:#c8c8c8;"></div>
<div style="left:330px;top:257px;width:1px;height:22px;background:#c8c8c8;"></div>
<div style="left:389px;top:257px;width:1px;height:22px;background:#c8c8c8;"></div>
<div style="left:479px;top:257px;width:1px;height:22px;background:#c8c8c8;"></div>
<div style="left:601px;top:257px;width:1px;height:22px;background:#c8c8c8;"></div>
<div style="left:636px;top:254px;width:1px;height:32px;background:#c8c8c8;"></div>
<svg style="left:609px;top:259px;" width="18" height="18" viewBox="0 0 18 18"><g fill="#0f1f2b"><circle cx="9" cy="9" r="6.3"/><rect x="6.8" y="0.3" width="4.4" height="17.4" rx="0.8" transform="rotate(0 9 9)"/><rect x="6.8" y="0.3" width="4.4" height="17.4" rx="0.8" transform="rotate(60 9 9)"/><rect x="6.8" y="0.3" width="4.4" height="17.4" rx="0.8" transform="rotate(120 9 9)"/></g><circle cx="9" cy="9" r="3" fill="#fff"/></svg>
<div style="left:1154px;top:258px;width:176px;height:20px;background:#fff;border:1px solid #a8a8a8;"></div>
<div style="left:1313px;top:259px;width:16px;height:18px;background:#f0f0f0;border-left:1px solid #ccc;"></div>
<svg style="left:1318px;top:267px;" width="7" height="4" viewBox="0 0 7 4"><path d="M0 0 L7 0 L3.5 4Z" fill="#666"/></svg>
<div style="left:1157px;top:260.0px;height:15px;line-height:15px;font-size:11px;color:#222;font-weight:normal;white-space:nowrap;letter-spacing:-0.1px;">Assembly and options</div>
<svg style="left:52px;top:287px;" width="27" height="27" viewBox="0 0 27 27"><path d="M1.1 25 L2.7 17.4 L15.4 4.8 L21.4 10.8 L8.7 23.4Z" fill="#0f1f2b"/><path d="M17.2 2.9 Q20.4 -0.6 23.6 2.6 Q26.8 5.8 23.3 9 L23 9.2 L16.9 3.1Z" fill="#0f1f2b"/><path d="M5.6 19.3 L15.8 9.1" stroke="#fff" stroke-width="1.2"/></svg>
<svg style="left:84px;top:290px;" width="21" height="20" viewBox="0 0 21 20"><path d="M1.6 1.6 L16.8 1.6 Q19 1.6 19 4 L19 18.4 L1.6 18.4Z" fill="none" stroke="#707070" stroke-width="2.2"/><rect x="3.6" y="2" width="11" height="6.4" fill="#707070"/><rect x="9.8" y="3" width="2" height="4.4" fill="#fff"/></svg>
<svg style="left:111px;top:290px;" width="19" height="20" viewBox="0 0 19 20"><path d="M8.3 0.9 L1 7.3 L8.3 14.2 L8.3 10.3 Q12.8 10.3 14.9 19.2 Q17.8 12.2 14.2 8 Q11.8 5.3 8.3 5.2Z" fill="#707070"/></svg>
<div style="left:138px;top:291px;width:498px;height:20px;background:#fff;border:1px solid #c8c8c8;border-top:2px solid #777;"></div>
<svg style="left:664px;top:292px;" width="21" height="20" viewBox="0 0 21 20"><path d="M0.5 1 L20.5 1 L13 10 L13 19 L8 19 L8 10Z" fill="#0f1f2b"/><ellipse cx="10.5" cy="2" rx="9" ry="2" fill="#fff" stroke="#0f1f2b" stroke-width="1.4"/><path d="M8.5 6 L12.5 10 M12.5 6 L8.5 10" stroke="#fff" stroke-width="1.3"/></svg>
<svg style="left:697px;top:293px;" width="18" height="18" viewBox="0 0 18 18"><path d="M2.5 8 A7 7 0 0 1 14.5 4.5" fill="none" stroke="#333" stroke-width="2"/><path d="M11.5 1.5 L17 1 L16.5 6.5Z" fill="#333"/><path d="M15.5 10 A7 7 0 0 1 3.5 13.5" fill="none" stroke="#333" stroke-width="2"/><path d="M6.5 16.5 L1 17 L1.5 11.5Z" fill="#333"/></svg>
<div style="left:724px;top:291px;width:1233px;height:20px;background:#fff;border:1px solid #aaa;border-right:none;"></div>
<div style="left:727px;top:293.5px;height:15px;line-height:15px;font-size:11px;color:#222;font-weight:normal;white-space:nowrap;">Search for an item</div>
<div style="left:31px;top:318px;width:1926px;height:21px;background:#222a36;"></div>
<div style="left:44px;top:320px;width:1px;height:18px;background:#b8bcc4;"></div>
<div style="left:57px;top:320px;width:1px;height:18px;background:#b8bcc4;"></div>
<div style="left:70px;top:320px;width:1px;height:18px;background:#b8bcc4;"></div>
<div style="left:83px;top:320px;width:1px;height:18px;background:#b8bcc4;"></div>
<div style="left:96px;top:320px;width:1px;height:18px;background:#b8bcc4;"></div>
<div style="left:109px;top:320px;width:1px;height:18px;background:#b8bcc4;"></div>
<div style="left:122px;top:320px;width:1px;height:18px;background:#b8bcc4;"></div>
<div style="left:172px;top:320px;width:1px;height:18px;background:#b8bcc4;"></div>
<div style="left:197px;top:320px;width:1px;height:18px;background:#b8bcc4;"></div>
<div style="left:228px;top:320px;width:1px;height:18px;background:#b8bcc4;"></div>
<div style="left:264px;top:320px;width:1px;height:18px;background:#b8bcc4;"></div>
<div style="left:567px;top:320px;width:1px;height:18px;background:#b8bcc4;"></div>
<div style="left:867px;top:320px;width:1px;height:18px;background:#b8bcc4;"></div>
<div style="left:920px;top:320px;width:1px;height:18px;background:#b8bcc4;"></div>
<div style="left:934px;top:320px;width:1px;height:18px;background:#b8bcc4;"></div>
<div style="left:965px;top:320px;width:1px;height:18px;background:#b8bcc4;"></div>
<div style="left:1708px;top:320px;width:1px;height:18px;background:#b8bcc4;"></div>
<div style="left:1721px;top:320px;width:1px;height:18px;background:#b8bcc4;"></div>
<div style="left:1734px;top:320px;width:1px;height:18px;background:#b8bcc4;"></div>
<div style="left:1747px;top:320px;width:1px;height:18px;background:#b8bcc4;"></div>
<div style="left:1847px;top:320px;width:1px;height:18px;background:#b8bcc4;"></div>
<div style="left:1860px;top:320px;width:1px;height:18px;background:#b8bcc4;"></div>
<div style="left:1910px;top:320px;width:1px;height:18px;background:#b8bcc4;"></div>
<div style="left:1923px;top:320px;width:1px;height:18px;background:#b8bcc4;"></div>
<div style="left:1936px;top:320px;width:1px;height:18px;background:#b8bcc4;"></div>
<div style="left:-112.0px;top:320.5px;width:300px;text-align:center;height:17px;line-height:17px;font-size:12.5px;color:#fff;font-weight:bold;white-space:nowrap;letter-spacing:-0.3px;">1</div>
<div style="left:-99.0px;top:320.5px;width:300px;text-align:center;height:17px;line-height:17px;font-size:12.5px;color:#fff;font-weight:bold;white-space:nowrap;letter-spacing:-0.3px;">2</div>
<div style="left:-86.0px;top:320.5px;width:300px;text-align:center;height:17px;line-height:17px;font-size:12.5px;color:#fff;font-weight:bold;white-space:nowrap;letter-spacing:-0.3px;">3</div>
<div style="left:-73.0px;top:320.5px;width:300px;text-align:center;height:17px;line-height:17px;font-size:12.5px;color:#fff;font-weight:bold;white-space:nowrap;letter-spacing:-0.3px;">4</div>
<div style="left:-60.0px;top:320.5px;width:300px;text-align:center;height:17px;line-height:17px;font-size:12.5px;color:#fff;font-weight:bold;white-space:nowrap;letter-spacing:-0.3px;">5</div>
<div style="left:-47.0px;top:320.5px;width:300px;text-align:center;height:17px;line-height:17px;font-size:12.5px;color:#fff;font-weight:bold;white-space:nowrap;letter-spacing:-0.3px;">6</div>
<div style="left:-34.0px;top:320.5px;width:300px;text-align:center;height:17px;line-height:17px;font-size:12.5px;color:#fff;font-weight:bold;white-space:nowrap;letter-spacing:-0.3px;">*</div>
<div style="left:-3.0px;top:320.5px;width:300px;text-align:center;height:17px;line-height:17px;font-size:12.5px;color:#fff;font-weight:bold;white-space:nowrap;letter-spacing:-0.3px;">Edit</div>
<div style="left:35.0px;top:320.5px;width:300px;text-align:center;height:17px;line-height:17px;font-size:12.5px;color:#fff;font-weight:bold;white-space:nowrap;letter-spacing:-0.3px;">O</div>
<div style="left:63.0px;top:320.5px;width:300px;text-align:center;height:17px;line-height:17px;font-size:12.5px;color:#fff;font-weight:bold;white-space:nowrap;letter-spacing:-0.3px;">Incl.</div>
<div style="left:97.0px;top:320.5px;width:300px;text-align:center;height:17px;line-height:17px;font-size:12.5px;color:#fff;font-weight:bold;white-space:nowrap;letter-spacing:-0.3px;">Type</div>
<div style="left:266.0px;top:320.5px;width:300px;text-align:center;height:17px;line-height:17px;font-size:12.5px;color:#fff;font-weight:bold;white-space:nowrap;letter-spacing:-0.3px;">Name</div>
<div style="left:567.0px;top:320.5px;width:300px;text-align:center;height:17px;line-height:17px;font-size:12.5px;color:#fff;font-weight:bold;white-space:nowrap;letter-spacing:-0.3px;">Identification</div>
<div style="left:744.0px;top:320.5px;width:300px;text-align:center;height:17px;line-height:17px;font-size:12.5px;color:#fff;font-weight:bold;white-space:nowrap;letter-spacing:-0.3px;">Alt.</div>
<div style="left:801.0px;top:320.5px;width:300px;text-align:center;height:17px;line-height:17px;font-size:12.5px;color:#fff;font-weight:bold;white-space:nowrap;letter-spacing:-0.3px;">C/P</div>
<div style="left:1186.0px;top:320.5px;width:300px;text-align:center;height:17px;line-height:17px;font-size:12.5px;color:#fff;font-weight:bold;white-space:nowrap;letter-spacing:-0.3px;">Optional settings</div>
<div style="left:1648.0px;top:320.5px;width:300px;text-align:center;height:17px;line-height:17px;font-size:12.5px;color:#fff;font-weight:bold;white-space:nowrap;letter-spacing:-0.3px;">Supplier</div>
<div style="left:1861px;top:318px;width:49px;height:21px;overflow:hidden;">
<div style="left:-3px;top:2.5px;height:17px;line-height:17px;font-size:12.5px;color:#fff;font-weight:bold;white-space:nowrap;letter-spacing:-0.6px;">Fin. M Qt</div>
</div>
<div style="left:916.0px;top:319.5px;width:20px;text-align:center;height:18px;line-height:18px;font-size:13px;color:#fff;font-weight:bold;white-space:nowrap;">+</div>
<div style="left:1704.5px;top:319.5px;width:20px;text-align:center;height:18px;line-height:18px;font-size:13px;color:#2aa0f0;font-weight:bold;white-space:nowrap;">+</div>
<div style="left:1717.5px;top:319.5px;width:20px;text-align:center;height:18px;line-height:18px;font-size:13px;color:#f0801e;font-weight:bold;white-space:nowrap;">+</div>
<div style="left:1730.5px;top:319.5px;width:20px;text-align:center;height:18px;line-height:18px;font-size:13px;color:#b49a20;font-weight:bold;white-space:nowrap;">+</div>
<div style="left:1843.5px;top:319.5px;width:20px;text-align:center;height:18px;line-height:18px;font-size:13px;color:#ee3d8f;font-weight:bold;white-space:nowrap;">+</div>
<div style="left:1906.5px;top:319.5px;width:20px;text-align:center;height:18px;line-height:18px;font-size:13px;color:#2aa0f0;font-weight:bold;white-space:nowrap;">+</div>
<div style="left:1919.5px;top:319.5px;width:20px;text-align:center;height:18px;line-height:18px;font-size:13px;color:#f0801e;font-weight:bold;white-space:nowrap;">+</div>
<div style="left:1945px;top:320.0px;height:17px;line-height:17px;font-size:12.5px;color:#f0801e;font-weight:bold;white-space:nowrap;">%</div>
<div style="left:31px;top:339px;width:1926px;height:20px;background:#fff;"></div>
<div style="left:31px;top:359px;width:1926px;height:35px;background:#2a5373;"></div>
<div style="left:31px;top:394px;width:1926px;height:1px;background:#eef2f6;"></div>
<div style="left:31px;top:393px;width:1926px;height:1px;background:#22486a;"></div>
<div style="left:31px;top:395px;width:1926px;height:35px;background:#366b90;"></div>
<div style="left:31px;top:430px;width:1926px;height:1px;background:#eef2f6;"></div>
<div style="left:31px;top:429px;width:1926px;height:1px;background:#2c5f84;"></div>
<div style="left:31px;top:431px;width:1926px;height:19px;background:#366b90;"></div>
<div style="left:31px;top:450px;width:1926px;height:1px;background:#e6e6ec;"></div>
<div style="left:31px;top:449px;width:1926px;height:1px;background:#2c5f84;"></div>
<div style="left:31px;top:451px;width:1926px;height:19px;background:#cbccd7;"></div>
<div style="left:31px;top:470px;width:1926px;height:1px;background:#ececf1;"></div>
<div style="left:31px;top:471px;width:1926px;height:35px;background:#cbccd7;"></div>
<div style="left:31px;top:506px;width:1926px;height:1px;background:#ececf1;"></div>
<div style="left:31px;top:507px;width:1926px;height:35px;background:#d9dae2;"></div>
<div style="left:31px;top:542px;width:1926px;height:1px;background:#eeeef2;"></div>
<div style="left:31px;top:543px;width:1926px;height:35px;background:#d9dae2;"></div>
<div style="left:31px;top:578px;width:1926px;height:36px;background:#e8e8ee;"></div>
<div style="left:31px;top:614px;width:1926px;height:1px;background:#f2f2f5;"></div>
<div style="left:31px;top:615px;width:1926px;height:35px;background:#e8e8ee;"></div>
<div style="left:31px;top:650px;width:1926px;height:1px;background:#f2f2f5;"></div>
<div style="left:31px;top:651px;width:1926px;height:19px;background:#e8e8ee;"></div>
<div style="left:31px;top:670px;width:1926px;height:1px;background:#f2f2f5;"></div>
<div style="left:31px;top:671px;width:1926px;height:19px;background:#e8e8ee;"></div>
<div style="left:31px;top:690px;width:1926px;height:1px;background:#f2f2f5;"></div>
<div style="left:31px;top:691px;width:1926px;height:19px;background:#e8e8ee;"></div>
<div style="left:31px;top:710px;width:1926px;height:1px;background:#f2f2f5;"></div>
<div style="left:31px;top:711px;width:1926px;height:35px;background:#e8e8ee;"></div>
<div style="left:31px;top:746px;width:1926px;height:1px;background:#f2f2f5;"></div>
<div style="left:31px;top:747px;width:1926px;height:35px;background:#e8e8ee;"></div>
<div style="left:31px;top:782px;width:1926px;height:1px;background:#f2f2f5;"></div>
<div style="left:31px;top:783px;width:1926px;height:35px;background:#e8e8ee;"></div>
<div style="left:31px;top:818px;width:1926px;height:1px;background:#f2f2f5;"></div>
<div style="left:31px;top:819px;width:1926px;height:19px;background:#366b90;"></div>
<div style="left:31px;top:838px;width:1926px;height:1px;background:#eef2f6;"></div>
<div style="left:31px;top:837px;width:1926px;height:1px;background:#2c5f84;"></div>
<div style="left:31px;top:839px;width:1926px;height:35px;background:#366b90;"></div>
<div style="left:31px;top:874px;width:1926px;height:1px;background:#eef2f6;"></div>
<div style="left:31px;top:873px;width:1926px;height:1px;background:#2c5f84;"></div>
<div style="left:31px;top:875px;width:1926px;height:2px;background:#366b90;"></div>
<div style="left:31px;top:877px;width:1926px;height:1px;background:#808080;"></div>
<div style="left:31px;top:318px;width:1px;height:560px;background:#8a8a8a;"></div>
<div style="left:964px;top:339px;width:1px;height:538px;background:#707070;"></div>
<div style="left:31px;top:559px;width:1926px;height:2px;background:#000;"></div>
<div style="left:31px;top:576px;width:1926px;height:2px;background:#000;"></div>
<div style="left:38px;top:352px;width:1px;height:33px;background:#000;"></div>
<div style="left:38px;top:384px;width:9px;height:1px;background:#000;"></div>
<div style="left:38px;top:366px;width:13px;height:1px;background:#000;"></div>
<div style="left:51px;top:388px;width:1px;height:490px;background:#000;"></div>
<div style="left:51px;top:402px;width:13px;height:1px;background:#000;"></div>
<div style="left:51px;top:420px;width:9px;height:1px;background:#000;"></div>
<div style="left:51px;top:440px;width:9px;height:1px;background:#000;"></div>
<div style="left:51px;top:828px;width:9px;height:1px;background:#000;"></div>
<div style="left:51px;top:864px;width:9px;height:1px;background:#000;"></div>
<div style="left:51px;top:846px;width:13px;height:1px;background:#000;"></div>
<div style="left:64px;top:444px;width:1px;height:53px;background:#000;"></div>
<div style="left:64px;top:460px;width:9px;height:1px;background:#000;"></div>
<div style="left:64px;top:478px;width:13px;height:1px;background:#000;"></div>
<div style="left:64px;top:496px;width:9px;height:1px;background:#000;"></div>
<div style="left:77px;top:500px;width:1px;height:69px;background:#000;"></div>
<div style="left:77px;top:514px;width:13px;height:1px;background:#000;"></div>
<div style="left:77px;top:532px;width:9px;height:1px;background:#000;"></div>
<div style="left:77px;top:550px;width:13px;height:1px;background:#000;"></div>
<div style="left:77px;top:568px;width:9px;height:1px;background:#000;"></div>
<div style="left:90px;top:572px;width:1px;height:237px;background:#000;"></div>
<div style="left:90px;top:586px;width:13px;height:1px;background:#000;"></div>
<div style="left:90px;top:604px;width:13px;height:1px;background:#000;"></div>
<div style="left:90px;top:622px;width:13px;height:1px;background:#000;"></div>
<div style="left:90px;top:640px;width:13px;height:1px;background:#000;"></div>
<div style="left:90px;top:660px;width:13px;height:1px;background:#000;"></div>
<div style="left:90px;top:680px;width:13px;height:1px;background:#000;"></div>
<div style="left:90px;top:700px;width:13px;height:1px;background:#000;"></div>
<div style="left:90px;top:718px;width:13px;height:1px;background:#000;"></div>
<div style="left:90px;top:736px;width:13px;height:1px;background:#000;"></div>
<div style="left:90px;top:754px;width:13px;height:1px;background:#000;"></div>
<div style="left:90px;top:772px;width:13px;height:1px;background:#000;"></div>
<div style="left:90px;top:790px;width:13px;height:1px;background:#000;"></div>
<div style="left:90px;top:808px;width:13px;height:1px;background:#000;"></div>
<svg style="left:0;top:0" width="0" height="0"><defs><linearGradient id="eg" x1="0" y1="0" x2="0" y2="1"><stop offset="0" stop-color="#fff"/><stop offset="1" stop-color="#d8d8d8"/></linearGradient></defs></svg>
<svg style="left:34.0px;top:344.0px;" width="9" height="9" viewBox="0 0 9 9"><rect x="0.5" y="0.5" width="8" height="8" fill="url(#eg)" stroke="#9a9a9a" stroke-width="1"/><rect x="2" y="4" width="5" height="1" fill="#2244aa"/></svg>
<svg style="left:47.0px;top:380.0px;" width="9" height="9" viewBox="0 0 9 9"><rect x="0.5" y="0.5" width="8" height="8" fill="url(#eg)" stroke="#9a9a9a" stroke-width="1"/><rect x="2" y="4" width="5" height="1" fill="#2244aa"/></svg>
<svg style="left:60.0px;top:416.0px;" width="9" height="9" viewBox="0 0 9 9"><rect x="0.5" y="0.5" width="8" height="8" fill="url(#eg)" stroke="#9a9a9a" stroke-width="1"/><rect x="2" y="4" width="5" height="1" fill="#2244aa"/><rect x="4" y="2" width="1" height="5" fill="#2244aa"/></svg>
<svg style="left:60.0px;top:436.0px;" width="9" height="9" viewBox="0 0 9 9"><rect x="0.5" y="0.5" width="8" height="8" fill="url(#eg)" stroke="#9a9a9a" stroke-width="1"/><rect x="2" y="4" width="5" height="1" fill="#2244aa"/></svg>
<svg style="left:73.0px;top:456.0px;" width="9" height="9" viewBox="0 0 9 9"><rect x="0.5" y="0.5" width="8" height="8" fill="url(#eg)" stroke="#9a9a9a" stroke-width="1"/><rect x="2" y="4" width="5" height="1" fill="#2244aa"/><rect x="4" y="2" width="1" height="5" fill="#2244aa"/></svg>
<svg style="left:73.0px;top:492.0px;" width="9" height="9" viewBox="0 0 9 9"><rect x="0.5" y="0.5" width="8" height="8" fill="url(#eg)" stroke="#9a9a9a" stroke-width="1"/><rect x="2" y="4" width="5" height="1" fill="#2244aa"/></svg>
<svg style="left:86.0px;top:528.0px;" width="9" height="9" viewBox="0 0 9 9"><rect x="0.5" y="0.5" width="8" height="8" fill="url(#eg)" stroke="#9a9a9a" stroke-width="1"/><rect x="2" y="4" width="5" height="1" fill="#2244aa"/><rect x="4" y="2" width="1" height="5" fill="#2244aa"/></svg>
<svg style="left:86.0px;top:564.0px;" width="9" height="9" viewBox="0 0 9 9"><rect x="0.5" y="0.5" width="8" height="8" fill="url(#eg)" stroke="#9a9a9a" stroke-width="1"/><rect x="2" y="4" width="5" height="1" fill="#2244aa"/></svg>
<svg style="left:60.0px;top:824.0px;" width="9" height="9" viewBox="0 0 9 9"><rect x="0.5" y="0.5" width="8" height="8" fill="url(#eg)" stroke="#9a9a9a" stroke-width="1"/><rect x="2" y="4" width="5" height="1" fill="#2244aa"/><rect x="4" y="2" width="1" height="5" fill="#2244aa"/></svg>
<svg style="left:60.0px;top:860.0px;" width="9" height="9" viewBox="0 0 9 9"><rect x="0.5" y="0.5" width="8" height="8" fill="url(#eg)" stroke="#9a9a9a" stroke-width="1"/><rect x="2" y="4" width="5" height="1" fill="#2244aa"/><rect x="4" y="2" width="1" height="5" fill="#2244aa"/></svg>
<div style="left:173px;top:375px;width:25px;height:19px;background:#f2c300;"></div>
<div style="left:175.5px;top:377.0px;width:20px;text-align:center;height:15px;line-height:15px;font-size:11px;color:#111;font-weight:normal;white-space:nowrap;">0</div>
<div style="left:173px;top:411px;width:25px;height:19px;background:#f2c300;"></div>
<div style="left:175.5px;top:413.0px;width:20px;text-align:center;height:15px;line-height:15px;font-size:11px;color:#111;font-weight:normal;white-space:nowrap;">0</div>
<div style="left:173px;top:450px;width:25px;height:20px;background:#f2c300;"></div>
<div style="left:175.5px;top:452.5px;width:20px;text-align:center;height:15px;line-height:15px;font-size:11px;color:#111;font-weight:normal;white-space:nowrap;">0</div>
<div style="left:173px;top:487px;width:56px;height:19px;background:#f2c300;"></div>
<div style="left:175.5px;top:489.0px;width:20px;text-align:center;height:15px;line-height:15px;font-size:11px;color:#111;font-weight:normal;white-space:nowrap;">0</div>
<div style="left:173px;top:523px;width:56px;height:19px;background:#f2c300;"></div>
<div style="left:175.5px;top:525.0px;width:20px;text-align:center;height:15px;line-height:15px;font-size:11px;color:#111;font-weight:normal;white-space:nowrap;">0</div>
<div style="left:173px;top:561px;width:25px;height:18px;background:#f2c300;"></div>
<div style="left:175.5px;top:562.5px;width:20px;text-align:center;height:15px;line-height:15px;font-size:11px;color:#111;font-weight:normal;white-space:nowrap;">0</div>
<div style="left:173px;top:595px;width:25px;height:19px;background:#f2c300;"></div>
<div style="left:175.5px;top:597.0px;width:20px;text-align:center;height:15px;line-height:15px;font-size:11px;color:#111;font-weight:normal;white-space:nowrap;">0</div>
<div style="left:173px;top:631px;width:25px;height:19px;background:#f2c300;"></div>
<div style="left:175.5px;top:633.0px;width:20px;text-align:center;height:15px;line-height:15px;font-size:11px;color:#111;font-weight:normal;white-space:nowrap;">0</div>
<div style="left:173px;top:651px;width:25px;height:19px;background:#f2c300;"></div>
<div style="left:175.5px;top:653.0px;width:20px;text-align:center;height:15px;line-height:15px;font-size:11px;color:#111;font-weight:normal;white-space:nowrap;">0</div>
<div style="left:173px;top:671px;width:25px;height:19px;background:#f2c300;"></div>
<div style="left:175.5px;top:673.0px;width:20px;text-align:center;height:15px;line-height:15px;font-size:11px;color:#111;font-weight:normal;white-space:nowrap;">0</div>
<div style="left:173px;top:691px;width:25px;height:19px;background:#f2c300;"></div>
<div style="left:175.5px;top:693.0px;width:20px;text-align:center;height:15px;line-height:15px;font-size:11px;color:#111;font-weight:normal;white-space:nowrap;">0</div>
<div style="left:173px;top:727px;width:56px;height:19px;background:#f2c300;"></div>
<div style="left:175.5px;top:729.0px;width:20px;text-align:center;height:15px;line-height:15px;font-size:11px;color:#111;font-weight:normal;white-space:nowrap;">0</div>
<div style="left:173px;top:763px;width:25px;height:19px;background:#f2c300;"></div>
<div style="left:175.5px;top:765.0px;width:20px;text-align:center;height:15px;line-height:15px;font-size:11px;color:#111;font-weight:normal;white-space:nowrap;">0</div>
<div style="left:173px;top:799px;width:25px;height:19px;background:#f2c300;"></div>
<div style="left:175.5px;top:801.0px;width:20px;text-align:center;height:15px;line-height:15px;font-size:11px;color:#111;font-weight:normal;white-space:nowrap;">0</div>
<div style="left:173px;top:855px;width:25px;height:19px;background:#f2c300;"></div>
<div style="left:175.5px;top:857.0px;width:20px;text-align:center;height:15px;line-height:15px;font-size:11px;color:#111;font-weight:normal;white-space:nowrap;">0</div>
<svg style="left:207px;top:490px;" width="13" height="13" viewBox="0 0 13 13"><rect x="0.5" y="0.5" width="12" height="12" fill="#f4f4f6" stroke="#8a8a8a"/><path d="M3 6.5 L5.5 10 L10 2.5" fill="none" stroke="#3a5aa8" stroke-width="1.8"/></svg>
<svg style="left:207px;top:526px;" width="13" height="13" viewBox="0 0 13 13"><rect x="0.5" y="0.5" width="12" height="12" fill="#f4f4f6" stroke="#8a8a8a"/><path d="M3 6.5 L5.5 10 L10 2.5" fill="none" stroke="#3a5aa8" stroke-width="1.8"/></svg>
<svg style="left:207px;top:729px;" width="13" height="13" viewBox="0 0 13 13"><rect x="0.5" y="0.5" width="12" height="12" fill="#f4f4f6" stroke="#8a8a8a"/><path d="M3 6.5 L5.5 10 L10 2.5" fill="none" stroke="#3a5aa8" stroke-width="1.8"/></svg>
<svg style="left:141px;top:562px;" width="13" height="13" viewBox="0 0 13 13"><rect x="0.5" y="0.5" width="12" height="12" fill="#f4f4f6" stroke="#8a8a8a"/><path d="M3 6.5 L5.5 10 L10 2.5" fill="none" stroke="#3a5aa8" stroke-width="1.8"/></svg>
<div style="left:268px;top:339.6px;height:16px;line-height:16px;font-size:11.5px;color:#222;font-weight:normal;white-space:nowrap;">Model | Garage</div>
<div style="left:268px;top:376.0px;height:16px;line-height:16px;font-size:12px;color:#fff;font-weight:bold;white-space:nowrap;">00 Project total</div>
<div style="left:268px;top:412.0px;height:16px;line-height:16px;font-size:12px;color:#fff;font-weight:bold;white-space:nowrap;">01 Full General Conditions</div>
<div style="left:268px;top:432.0px;height:16px;line-height:16px;font-size:12px;color:#fff;font-weight:bold;white-space:nowrap;">02 Excavation and Backfill</div>
<div style="left:268px;top:452.0px;height:16px;line-height:16px;font-size:12px;color:#111;font-weight:bold;white-space:nowrap;">Excavation &amp; Backfill</div>
<div style="left:268px;top:488.0px;height:16px;line-height:16px;font-size:12px;color:#111;font-weight:bold;white-space:nowrap;">Draining foundations</div>
<div style="left:268px;top:524.0px;height:16px;line-height:16px;font-size:11.5px;color:#222;font-weight:normal;white-space:nowrap;">02 Foundation drains</div>
<div style="left:268px;top:561.0px;height:16px;line-height:16px;font-size:11.5px;color:#222;font-weight:normal;white-space:nowrap;">Drainage</div>
<div style="left:268px;top:596.0px;height:16px;line-height:16px;font-size:11.5px;color:#222;font-weight:normal;white-space:nowrap;">Agricultural Drain Perforated Coated 4" x 148'</div>
<div style="left:571px;top:596.0px;height:16px;line-height:16px;font-size:11.5px;color:#222;font-weight:normal;white-space:nowrap;">Agricultural Drain</div>
<div style="left:268px;top:632.0px;height:16px;line-height:16px;font-size:11.5px;color:#222;font-weight:normal;white-space:nowrap;">Agricultural Drain Tee 4" Armtec</div>
<div style="left:571px;top:632.0px;height:16px;line-height:16px;font-size:11.5px;color:#222;font-weight:normal;white-space:nowrap;">Tee Drain</div>
<div style="left:268px;top:652.0px;height:16px;line-height:16px;font-size:11.5px;color:#222;font-weight:normal;white-space:nowrap;">Agricultural Drain 4" Y Armtec</div>
<div style="left:571px;top:652.0px;height:16px;line-height:16px;font-size:11.5px;color:#222;font-weight:normal;white-space:nowrap;">Y Drain</div>
<div style="left:268px;top:672.0px;height:16px;line-height:16px;font-size:11.5px;color:#222;font-weight:normal;white-space:nowrap;">Agricultural Drain 90° Elbow 4" Armtec</div>
<div style="left:571px;top:672.0px;height:16px;line-height:16px;font-size:11.5px;color:#222;font-weight:normal;white-space:nowrap;">Elbow</div>
<div style="left:268px;top:692.0px;height:16px;line-height:16px;font-size:11.5px;color:#222;font-weight:normal;white-space:nowrap;">Union ° Drain Agricole 4" Armtec</div>
<div style="left:571px;top:692.0px;height:16px;line-height:16px;font-size:11.5px;color:#222;font-weight:normal;white-space:nowrap;">Elbow</div>
<div style="left:268px;top:728.0px;height:16px;line-height:16px;font-size:11.5px;color:#222;font-weight:normal;white-space:nowrap;">Geotextile Membrane Texel 7607 (5600 ft2/Roll)</div>
<div style="left:571px;top:728.0px;height:16px;line-height:16px;font-size:11.5px;color:#222;font-weight:normal;white-space:nowrap;">Geotextile</div>
<div style="left:268px;top:764.0px;height:16px;line-height:16px;font-size:11.5px;color:#222;font-weight:normal;white-space:nowrap;">Stone 3/4" Net (m3)</div>
<div style="left:571px;top:764.0px;height:16px;line-height:16px;font-size:11.5px;color:#222;font-weight:normal;white-space:nowrap;">Gravel</div>
<div style="left:268px;top:800.0px;height:16px;line-height:16px;font-size:11.5px;color:#222;font-weight:normal;white-space:nowrap;">Install Foundation Drains (ft/lin.)</div>
<div style="left:571px;top:488.0px;height:16px;line-height:16px;font-size:11.5px;color:#222;font-weight:normal;white-space:nowrap;">Type?|Comp?</div>
<div style="left:268px;top:820.0px;height:16px;line-height:16px;font-size:12px;color:#fff;font-weight:bold;white-space:nowrap;">03 Concrete and Formwork</div>
<div style="left:268px;top:856.0px;height:16px;line-height:16px;font-size:12px;color:#fff;font-weight:bold;white-space:nowrap;">06 Partition</div>
<svg style="left:238px;top:597px;" width="16" height="16" viewBox="0 0 16 16"><rect x="0" y="0" width="3" height="3.3" rx="0.6" fill="#000"/><rect x="4" y="0" width="6" height="3.3" rx="0.6" fill="#000"/><rect x="0" y="4" width="6" height="3.3" rx="0.6" fill="#000"/><rect x="7" y="4" width="6" height="3.3" rx="0.6" fill="#000"/><rect x="0" y="8" width="3" height="3.3" rx="0.6" fill="#000"/><rect x="4" y="8" width="6" height="3.3" rx="0.6" fill="#000"/><rect x="11" y="8" width="3" height="3.3" rx="0.6" fill="#000"/><rect x="0" y="12" width="6" height="3.3" rx="0.6" fill="#000"/><rect x="7" y="12" width="6" height="3.3" rx="0.6" fill="#000"/><rect x="14" y="12" width="2" height="3.3" rx="0.6" fill="#000"/></svg>
<svg style="left:238px;top:633px;" width="16" height="16" viewBox="0 0 16 16"><rect x="0" y="0" width="3" height="3.3" rx="0.6" fill="#000"/><rect x="4" y="0" width="6" height="3.3" rx="0.6" fill="#000"/><rect x="0" y="4" width="6" height="3.3" rx="0.6" fill="#000"/><rect x="7" y="4" width="6" height="3.3" rx="0.6" fill="#000"/><rect x="0" y="8" width="3" height="3.3" rx="0.6" fill="#000"/><rect x="4" y="8" width="6" height="3.3" rx="0.6" fill="#000"/><rect x="11" y="8" width="3" height="3.3" rx="0.6" fill="#000"/><rect x="0" y="12" width="6" height="3.3" rx="0.6" fill="#000"/><rect x="7" y="12" width="6" height="3.3" rx="0.6" fill="#000"/><rect x="14" y="12" width="2" height="3.3" rx="0.6" fill="#000"/></svg>
<svg style="left:238px;top:653px;" width="16" height="16" viewBox="0 0 16 16"><rect x="0" y="0" width="3" height="3.3" rx="0.6" fill="#000"/><rect x="4" y="0" width="6" height="3.3" rx="0.6" fill="#000"/><rect x="0" y="4" width="6" height="3.3" rx="0.6" fill="#000"/><rect x="7" y="4" width="6" height="3.3" rx="0.6" fill="#000"/><rect x="0" y="8" width="3" height="3.3" rx="0.6" fill="#000"/><rect x="4" y="8" width="6" height="3.3" rx="0.6" fill="#000"/><rect x="11" y="8" width="3" height="3.3" rx="0.6" fill="#000"/><rect x="0" y="12" width="6" height="3.3" rx="0.6" fill="#000"/><rect x="7" y="12" width="6" height="3.3" rx="0.6" fill="#000"/><rect x="14" y="12" width="2" height="3.3" rx="0.6" fill="#000"/></svg>
<svg style="left:238px;top:673px;" width="16" height="16" viewBox="0 0 16 16"><rect x="0" y="0" width="3" height="3.3" rx="0.6" fill="#000"/><rect x="4" y="0" width="6" height="3.3" rx="0.6" fill="#000"/><rect x="0" y="4" width="6" height="3.3" rx="0.6" fill="#000"/><rect x="7" y="4" width="6" height="3.3" rx="0.6" fill="#000"/><rect x="0" y="8" width="3" height="3.3" rx="0.6" fill="#000"/><rect x="4" y="8" width="6" height="3.3" rx="0.6" fill="#000"/><rect x="11" y="8" width="3" height="3.3" rx="0.6" fill="#000"/><rect x="0" y="12" width="6" height="3.3" rx="0.6" fill="#000"/><rect x="7" y="12" width="6" height="3.3" rx="0.6" fill="#000"/><rect x="14" y="12" width="2" height="3.3" rx="0.6" fill="#000"/></svg>
<svg style="left:238px;top:693px;" width="16" height="16" viewBox="0 0 16 16"><rect x="0" y="0" width="3" height="3.3" rx="0.6" fill="#000"/><rect x="4" y="0" width="6" height="3.3" rx="0.6" fill="#000"/><rect x="0" y="4" width="6" height="3.3" rx="0.6" fill="#000"/><rect x="7" y="4" width="6" height="3.3" rx="0.6" fill="#000"/><rect x="0" y="8" width="3" height="3.3" rx="0.6" fill="#000"/><rect x="4" y="8" width="6" height="3.3" rx="0.6" fill="#000"/><rect x="11" y="8" width="3" height="3.3" rx="0.6" fill="#000"/><rect x="0" y="12" width="6" height="3.3" rx="0.6" fill="#000"/><rect x="7" y="12" width="6" height="3.3" rx="0.6" fill="#000"/><rect x="14" y="12" width="2" height="3.3" rx="0.6" fill="#000"/></svg>
<svg style="left:238px;top:729px;" width="16" height="16" viewBox="0 0 16 16"><rect x="0" y="0" width="3" height="3.3" rx="0.6" fill="#000"/><rect x="4" y="0" width="6" height="3.3" rx="0.6" fill="#000"/><rect x="0" y="4" width="6" height="3.3" rx="0.6" fill="#000"/><rect x="7" y="4" width="6" height="3.3" rx="0.6" fill="#000"/><rect x="0" y="8" width="3" height="3.3" rx="0.6" fill="#000"/><rect x="4" y="8" width="6" height="3.3" rx="0.6" fill="#000"/><rect x="11" y="8" width="3" height="3.3" rx="0.6" fill="#000"/><rect x="0" y="12" width="6" height="3.3" rx="0.6" fill="#000"/><rect x="7" y="12" width="6" height="3.3" rx="0.6" fill="#000"/><rect x="14" y="12" width="2" height="3.3" rx="0.6" fill="#000"/></svg>
<svg style="left:238px;top:765px;" width="16" height="16" viewBox="0 0 16 16"><rect x="0" y="0" width="3" height="3.3" rx="0.6" fill="#000"/><rect x="4" y="0" width="6" height="3.3" rx="0.6" fill="#000"/><rect x="0" y="4" width="6" height="3.3" rx="0.6" fill="#000"/><rect x="7" y="4" width="6" height="3.3" rx="0.6" fill="#000"/><rect x="0" y="8" width="3" height="3.3" rx="0.6" fill="#000"/><rect x="4" y="8" width="6" height="3.3" rx="0.6" fill="#000"/><rect x="11" y="8" width="3" height="3.3" rx="0.6" fill="#000"/><rect x="0" y="12" width="6" height="3.3" rx="0.6" fill="#000"/><rect x="7" y="12" width="6" height="3.3" rx="0.6" fill="#000"/><rect x="14" y="12" width="2" height="3.3" rx="0.6" fill="#000"/></svg>
<svg style="left:237px;top:523px;" width="20" height="19" viewBox="0 0 20 19"><path d="M2.5 17.8 L2.5 8.5 Q2.5 1.8 9 1.8 Q13.2 1.8 15.5 4.8 L17.2 8.2 L16.2 17.8 Z" fill="#000"/><ellipse cx="8.6" cy="11.2" rx="4.3" ry="5.9" fill="#e6e8ee"/><path d="M6.3 7.6 L11 7.6 L8.6 15.3" fill="none" stroke="#000" stroke-width="1.6"/><rect x="16" y="16" width="3.2" height="1.8" fill="#000"/></svg>
<svg style="left:237px;top:799px;" width="20" height="19" viewBox="0 0 20 19"><circle cx="9.3" cy="4.2" r="1.6" fill="#2a2a2a"/><path d="M1.4 8.8 L3.5 6 L8.7 6.6 L10 12.2 L4.6 11.8 L3 9.5Z" fill="#2a2a2a"/><path d="M4.9 12 L2.6 17.6 M6.6 12 L7.6 17.6" stroke="#2a2a2a" stroke-width="1.6"/><path d="M5 11 L11.5 13.8" stroke="#555" stroke-width="0.9"/><path d="M9.8 17.7 L13.4 12.4 L17.2 17.7Z" fill="#2a2a2a"/></svg>
<svg style="left:943.5px;top:377.5px;" width="13" height="14" viewBox="0 0 13 14"><path d="M2.3 0 L10.7 0 L10.7 7.8 L13 7.8 L6.5 13.5 L0 7.8 L2.3 7.8Z" fill="#0f1f2b"/><rect x="5.7" y="1.3" width="1.7" height="5.6" fill="#fff"/><rect x="3.7" y="3.3" width="5.6" height="1.7" fill="#fff"/></svg>
<svg style="left:943.5px;top:413.5px;" width="13" height="14" viewBox="0 0 13 14"><path d="M2.3 0 L10.7 0 L10.7 7.8 L13 7.8 L6.5 13.5 L0 7.8 L2.3 7.8Z" fill="#0f1f2b"/><rect x="5.7" y="1.3" width="1.7" height="5.6" fill="#fff"/><rect x="3.7" y="3.3" width="5.6" height="1.7" fill="#fff"/></svg>
<svg style="left:943.5px;top:433.5px;" width="13" height="14" viewBox="0 0 13 14"><path d="M2.3 0 L10.7 0 L10.7 7.8 L13 7.8 L6.5 13.5 L0 7.8 L2.3 7.8Z" fill="#0f1f2b"/><rect x="5.7" y="1.3" width="1.7" height="5.6" fill="#fff"/><rect x="3.7" y="3.3" width="5.6" height="1.7" fill="#fff"/></svg>
<svg style="left:943.5px;top:453.5px;" width="13" height="14" viewBox="0 0 13 14"><path d="M2.3 0 L10.7 0 L10.7 7.8 L13 7.8 L6.5 13.5 L0 7.8 L2.3 7.8Z" fill="#0f1f2b"/><rect x="5.7" y="1.3" width="1.7" height="5.6" fill="#fff"/><rect x="3.7" y="3.3" width="5.6" height="1.7" fill="#fff"/></svg>
<svg style="left:943.5px;top:562.5px;" width="13" height="14" viewBox="0 0 13 14"><path d="M2.3 0 L10.7 0 L10.7 7.8 L13 7.8 L6.5 13.5 L0 7.8 L2.3 7.8Z" fill="#0f1f2b"/><rect x="5.7" y="1.3" width="1.7" height="5.6" fill="#fff"/><rect x="3.7" y="3.3" width="5.6" height="1.7" fill="#fff"/></svg>
<svg style="left:943.5px;top:821.5px;" width="13" height="14" viewBox="0 0 13 14"><path d="M2.3 0 L10.7 0 L10.7 7.8 L13 7.8 L6.5 13.5 L0 7.8 L2.3 7.8Z" fill="#0f1f2b"/><rect x="5.7" y="1.3" width="1.7" height="5.6" fill="#fff"/><rect x="3.7" y="3.3" width="5.6" height="1.7" fill="#fff"/></svg>
<svg style="left:943.5px;top:857.5px;" width="13" height="14" viewBox="0 0 13 14"><path d="M2.3 0 L10.7 0 L10.7 7.8 L13 7.8 L6.5 13.5 L0 7.8 L2.3 7.8Z" fill="#0f1f2b"/><rect x="5.7" y="1.3" width="1.7" height="5.6" fill="#fff"/><rect x="3.7" y="3.3" width="5.6" height="1.7" fill="#fff"/></svg>
<div style="left:935px;top:487px;width:29px;height:19px;background:#f2c300;"></div>
<svg style="left:943.5px;top:489.5px;" width="13" height="14" viewBox="0 0 13 14"><path d="M2.3 0 L10.7 0 L10.7 7.8 L13 7.8 L6.5 13.5 L0 7.8 L2.3 7.8Z" fill="#0f1f2b"/><rect x="5.7" y="1.3" width="1.7" height="5.6" fill="#fff"/><rect x="3.7" y="3.3" width="5.6" height="1.7" fill="#fff"/></svg>
<div style="left:935px;top:523px;width:29px;height:19px;background:#f2c300;"></div>
<svg style="left:943.5px;top:525.5px;" width="13" height="14" viewBox="0 0 13 14"><path d="M2.3 0 L10.7 0 L10.7 7.8 L13 7.8 L6.5 13.5 L0 7.8 L2.3 7.8Z" fill="#0f1f2b"/><rect x="5.7" y="1.3" width="1.7" height="5.6" fill="#fff"/><rect x="3.7" y="3.3" width="5.6" height="1.7" fill="#fff"/></svg>
<div style="left:935px;top:727px;width:29px;height:19px;background:#f2c300;"></div>
<svg style="left:943.5px;top:729.5px;" width="13" height="14" viewBox="0 0 13 14"><path d="M2.3 0 L10.7 0 L10.7 7.8 L13 7.8 L6.5 13.5 L0 7.8 L2.3 7.8Z" fill="#0f1f2b"/><rect x="5.7" y="1.3" width="1.7" height="5.6" fill="#fff"/><rect x="3.7" y="3.3" width="5.6" height="1.7" fill="#fff"/></svg>
<div style="left:947.0px;top:361.0px;width:140px;text-align:center;height:13px;line-height:13px;font-size:9.5px;color:#e8e8e8;font-weight:normal;white-space:nowrap;">TotProject$</div>
<div style="left:966px;top:375px;width:102px;height:19px;background:#fdf6e3;"></div>
<div style="left:993px;top:376.5px;height:15px;line-height:15px;font-size:11px;color:#111;font-weight:normal;white-space:nowrap;"><u>0,00</u></div>
<div style="left:1020px;top:376.5px;height:15px;line-height:15px;font-size:11px;color:#111;font-weight:normal;white-space:nowrap;"><u>$</u></div>
<div style="left:947.0px;top:397.0px;width:140px;text-align:center;height:13px;line-height:13px;font-size:9.5px;color:#e8e8e8;font-weight:normal;white-space:nowrap;">TotProject$</div>
<div style="left:966px;top:411px;width:102px;height:18px;background:#fdf6e3;"></div>
<div style="left:993px;top:412.5px;height:15px;line-height:15px;font-size:11px;color:#111;font-weight:normal;white-space:nowrap;"><u>0,00</u></div>
<div style="left:1020px;top:412.5px;height:15px;line-height:15px;font-size:11px;color:#111;font-weight:normal;white-space:nowrap;"><u>$</u></div>
<div style="left:966px;top:487px;width:310px;height:19px;background:#fdf6e3;"></div>
<div style="left:947.0px;top:473.0px;width:140px;text-align:center;height:13px;line-height:13px;font-size:9.5px;color:#222;font-weight:normal;white-space:nowrap;">Vol</div>
<div style="left:1056.0px;top:473.0px;width:140px;text-align:center;height:13px;line-height:13px;font-size:9.5px;color:#222;font-weight:normal;white-space:nowrap;">Lgth</div>
<div style="left:1161.0px;top:473.0px;width:140px;text-align:center;height:13px;line-height:13px;font-size:9.5px;color:#222;font-weight:normal;white-space:nowrap;">Surf</div>
<div style="left:993px;top:488.5px;height:15px;line-height:15px;font-size:11px;color:#111;font-weight:normal;white-space:nowrap;"><u>0,00</u></div>
<div style="left:1020px;top:488.5px;height:15px;line-height:15px;font-size:11px;color:#111;font-weight:normal;white-space:nowrap;"><u>m3</u></div>
<div style="left:1103px;top:488.5px;height:15px;line-height:15px;font-size:11px;color:#111;font-weight:normal;white-space:nowrap;"><u>0,00</u></div>
<div style="left:1130px;top:488.5px;height:15px;line-height:15px;font-size:11px;color:#111;font-weight:normal;white-space:nowrap;"><u>ft</u></div>
<div style="left:1207px;top:488.5px;height:15px;line-height:15px;font-size:11px;color:#111;font-weight:normal;white-space:nowrap;"><u>0,00</u></div>
<div style="left:1234px;top:488.5px;height:15px;line-height:15px;font-size:11px;color:#111;font-weight:normal;white-space:nowrap;"><u>ft2</u></div>
<div style="left:966px;top:523px;width:310px;height:19px;background:#fdf6e3;"></div>
<div style="left:947.0px;top:509.0px;width:140px;text-align:center;height:13px;line-height:13px;font-size:9.5px;color:#222;font-weight:normal;white-space:nowrap;">Len-s</div>
<div style="left:1056.0px;top:509.0px;width:140px;text-align:center;height:13px;line-height:13px;font-size:9.5px;color:#222;font-weight:normal;white-space:nowrap;">MatVolReqForItems-s</div>
<div style="left:1161.0px;top:509.0px;width:140px;text-align:center;height:13px;line-height:13px;font-size:9.5px;color:#222;font-weight:normal;white-space:nowrap;">Surf-s</div>
<div style="left:993px;top:524.5px;height:15px;line-height:15px;font-size:11px;color:#111;font-weight:normal;white-space:nowrap;"><u>0,00</u></div>
<div style="left:1020px;top:524.5px;height:15px;line-height:15px;font-size:11px;color:#111;font-weight:normal;white-space:nowrap;"><u>ft</u></div>
<div style="left:1103px;top:524.5px;height:15px;line-height:15px;font-size:11px;color:#111;font-weight:normal;white-space:nowrap;"><u>0,00</u></div>
<div style="left:1130px;top:524.5px;height:15px;line-height:15px;font-size:11px;color:#111;font-weight:normal;white-space:nowrap;"><u>m3</u></div>
<div style="left:1207px;top:524.5px;height:15px;line-height:15px;font-size:11px;color:#111;font-weight:normal;white-space:nowrap;"><u>0,00</u></div>
<div style="left:1234px;top:524.5px;height:15px;line-height:15px;font-size:11px;color:#111;font-weight:normal;white-space:nowrap;"><u>ft2</u></div>
<div style="left:966px;top:561px;width:310px;height:15px;background:#fdf6e3;"></div>
<div style="left:947.0px;top:545.0px;width:140px;text-align:center;height:13px;line-height:13px;font-size:9.5px;color:#222;font-weight:normal;white-space:nowrap;">Lgth</div>
<div style="left:1056.0px;top:545.0px;width:140px;text-align:center;height:13px;line-height:13px;font-size:9.5px;color:#222;font-weight:normal;white-space:nowrap;">Vol</div>
<div style="left:1161.0px;top:545.0px;width:140px;text-align:center;height:13px;line-height:13px;font-size:9.5px;color:#222;font-weight:normal;white-space:nowrap;">Surf</div>
<div style="left:993px;top:561.5px;height:15px;line-height:15px;font-size:11px;color:#111;font-weight:normal;white-space:nowrap;"><u>0,00</u></div>
<div style="left:1020px;top:561.5px;height:15px;line-height:15px;font-size:11px;color:#111;font-weight:normal;white-space:nowrap;"><u>ft</u></div>
<div style="left:1103px;top:561.5px;height:15px;line-height:15px;font-size:11px;color:#111;font-weight:normal;white-space:nowrap;"><u>0,00</u></div>
<div style="left:1130px;top:561.5px;height:15px;line-height:15px;font-size:11px;color:#111;font-weight:normal;white-space:nowrap;"><u>m3</u></div>
<div style="left:1207px;top:561.5px;height:15px;line-height:15px;font-size:11px;color:#111;font-weight:normal;white-space:nowrap;"><u>0,00</u></div>
<div style="left:1234px;top:561.5px;height:15px;line-height:15px;font-size:11px;color:#111;font-weight:normal;white-space:nowrap;"><u>ft2</u></div>
<div style="left:966px;top:595px;width:102px;height:19px;background:#fdf6e3;"></div>
<div style="left:947.0px;top:581.0px;width:140px;text-align:center;height:13px;line-height:13px;font-size:9.5px;color:#222;font-weight:normal;white-space:nowrap;">UE</div>
<div style="left:993px;top:596.5px;height:15px;line-height:15px;font-size:11px;color:#111;font-weight:normal;white-space:nowrap;"><u>0,00</u></div>
<div style="left:1020px;top:596.5px;height:15px;line-height:15px;font-size:11px;color:#111;font-weight:normal;white-space:nowrap;"><u>ft</u></div>
<div style="left:947.0px;top:617.0px;width:140px;text-align:center;height:13px;line-height:13px;font-size:9.5px;color:#222;font-weight:normal;white-space:nowrap;">TE</div>
<div style="left:966px;top:631px;width:102px;height:19px;background:#f2c300;"></div>
<div style="left:990px;top:632.0px;height:16px;line-height:16px;font-size:11.5px;color:#111;font-weight:bold;white-space:nowrap;">0,00</div>
<div style="left:1019px;top:632.0px;height:16px;line-height:16px;font-size:11.5px;color:#111;font-weight:bold;white-space:nowrap;">unit</div>
<div style="left:966px;top:651px;width:102px;height:19px;background:#f2c300;"></div>
<div style="left:990px;top:652.0px;height:16px;line-height:16px;font-size:11.5px;color:#111;font-weight:bold;white-space:nowrap;">0,00</div>
<div style="left:1019px;top:652.0px;height:16px;line-height:16px;font-size:11.5px;color:#111;font-weight:bold;white-space:nowrap;">unit</div>
<div style="left:966px;top:671px;width:102px;height:19px;background:#f2c300;"></div>
<div style="left:990px;top:672.0px;height:16px;line-height:16px;font-size:11.5px;color:#111;font-weight:bold;white-space:nowrap;">0,00</div>
<div style="left:1019px;top:672.0px;height:16px;line-height:16px;font-size:11.5px;color:#111;font-weight:bold;white-space:nowrap;">unit</div>
<div style="left:966px;top:691px;width:102px;height:19px;background:#f2c300;"></div>
<div style="left:990px;top:692.0px;height:16px;line-height:16px;font-size:11.5px;color:#111;font-weight:bold;white-space:nowrap;">0,00</div>
<div style="left:1019px;top:692.0px;height:16px;line-height:16px;font-size:11.5px;color:#111;font-weight:bold;white-space:nowrap;">unit</div>
<div style="left:966px;top:727px;width:102px;height:19px;background:#fdf6e3;"></div>
<div style="left:947.0px;top:713.0px;width:140px;text-align:center;height:13px;line-height:13px;font-size:9.5px;color:#222;font-weight:normal;white-space:nowrap;">UE</div>
<div style="left:993px;top:728.5px;height:15px;line-height:15px;font-size:11px;color:#111;font-weight:normal;white-space:nowrap;"><u>0,00</u></div>
<div style="left:1020px;top:728.5px;height:15px;line-height:15px;font-size:11px;color:#111;font-weight:normal;white-space:nowrap;"><u>ft2</u></div>
<div style="left:966px;top:763px;width:102px;height:19px;background:#fdf6e3;"></div>
<div style="left:947.0px;top:749.0px;width:140px;text-align:center;height:13px;line-height:13px;font-size:9.5px;color:#222;font-weight:normal;white-space:nowrap;">TE</div>
<div style="left:993px;top:764.5px;height:15px;line-height:15px;font-size:11px;color:#111;font-weight:normal;white-space:nowrap;"><u>0,00</u></div>
<div style="left:1020px;top:764.5px;height:15px;line-height:15px;font-size:11px;color:#111;font-weight:normal;white-space:nowrap;"><u>m3</u></div>
<div style="left:947.0px;top:785.0px;width:140px;text-align:center;height:13px;line-height:13px;font-size:9.5px;color:#222;font-weight:normal;white-space:nowrap;">LUC</div>
<div style="left:966px;top:799px;width:102px;height:19px;background:#f2c300;"></div>
<div style="left:990px;top:800.0px;height:16px;line-height:16px;font-size:11.5px;color:#111;font-weight:bold;white-space:nowrap;">2,59</div>
<div style="left:1019px;top:800.0px;height:16px;line-height:16px;font-size:11.5px;color:#111;font-weight:bold;white-space:nowrap;">$/ft</div>
<div style="left:966px;top:855px;width:660px;height:19px;background:#fdf6e3;"></div>
<div style="left:947.0px;top:841.0px;width:140px;text-align:center;height:13px;line-height:13px;font-size:9.5px;color:#e8e8e8;font-weight:normal;white-space:nowrap;">SurfJointWalls-s</div>
<div style="left:993px;top:856.5px;height:15px;line-height:15px;font-size:11px;color:#111;font-weight:normal;white-space:nowrap;"><u>0,00</u></div>
<div style="left:1020px;top:856.5px;height:15px;line-height:15px;font-size:11px;color:#111;font-weight:normal;white-space:nowrap;"><u>ft2</u></div>
<div style="left:1056.0px;top:841.0px;width:140px;text-align:center;height:13px;line-height:13px;font-size:9.5px;color:#e8e8e8;font-weight:normal;white-space:nowrap;">SurfPrim-s</div>
<div style="left:1103px;top:856.5px;height:15px;line-height:15px;font-size:11px;color:#111;font-weight:normal;white-space:nowrap;"><u>0,00</u></div>
<div style="left:1130px;top:856.5px;height:15px;line-height:15px;font-size:11px;color:#111;font-weight:normal;white-space:nowrap;"><u>ft2</u></div>
<div style="left:1160.0px;top:841.0px;width:140px;text-align:center;height:13px;line-height:13px;font-size:9.5px;color:#e8e8e8;font-weight:normal;white-space:nowrap;">SurfPaint-s</div>
<div style="left:1207px;top:856.5px;height:15px;line-height:15px;font-size:11px;color:#111;font-weight:normal;white-space:nowrap;"><u>0,00</u></div>
<div style="left:1234px;top:856.5px;height:15px;line-height:15px;font-size:11px;color:#111;font-weight:normal;white-space:nowrap;"><u>ft2</u></div>
<div style="left:1259.0px;top:841.0px;width:140px;text-align:center;height:13px;line-height:13px;font-size:9.5px;color:#e8e8e8;font-weight:normal;white-space:nowrap;">SurfPrimeJoints-s</div>
<div style="left:1305px;top:856.5px;height:15px;line-height:15px;font-size:11px;color:#111;font-weight:normal;white-space:nowrap;"><u>0,00</u></div>
<div style="left:1332px;top:856.5px;height:15px;line-height:15px;font-size:11px;color:#111;font-weight:normal;white-space:nowrap;"><u>ft2</u></div>
<div style="left:1373.0px;top:841.0px;width:140px;text-align:center;height:13px;line-height:13px;font-size:9.5px;color:#e8e8e8;font-weight:normal;white-space:nowrap;">SurfPrimCeil-s</div>
<div style="left:1420px;top:856.5px;height:15px;line-height:15px;font-size:11px;color:#111;font-weight:normal;white-space:nowrap;"><u>0,00</u></div>
<div style="left:1447px;top:856.5px;height:15px;line-height:15px;font-size:11px;color:#111;font-weight:normal;white-space:nowrap;"><u>ft2</u></div>
<div style="left:1496.0px;top:841.0px;width:140px;text-align:center;height:13px;line-height:13px;font-size:9.5px;color:#e8e8e8;font-weight:normal;white-space:nowrap;">SurfPaintCeil-s</div>
<div style="left:1542px;top:856.5px;height:15px;line-height:15px;font-size:11px;color:#111;font-weight:normal;white-space:nowrap;"><u>0,00</u></div>
<div style="left:1569px;top:856.5px;height:15px;line-height:15px;font-size:11px;color:#111;font-weight:normal;white-space:nowrap;"><u>ft2</u></div>
<div style="left:1712px;top:596.5px;height:15px;line-height:15px;font-size:11px;color:#2aa8e8;font-weight:normal;white-space:nowrap;">$</div>
<div style="left:1751px;top:596.0px;height:16px;line-height:16px;font-size:11.5px;color:#111;font-weight:normal;white-space:nowrap;">Standard price</div>
<div style="left:1712px;top:632.5px;height:15px;line-height:15px;font-size:11px;color:#2aa8e8;font-weight:normal;white-space:nowrap;">$</div>
<div style="left:1751px;top:632.0px;height:16px;line-height:16px;font-size:11.5px;color:#111;font-weight:normal;white-space:nowrap;">Standard price</div>
<div style="left:1712px;top:652.5px;height:15px;line-height:15px;font-size:11px;color:#2aa8e8;font-weight:normal;white-space:nowrap;">$</div>
<div style="left:1751px;top:652.0px;height:16px;line-height:16px;font-size:11.5px;color:#111;font-weight:normal;white-space:nowrap;">Standard price</div>
<div style="left:1712px;top:672.5px;height:15px;line-height:15px;font-size:11px;color:#2aa8e8;font-weight:normal;white-space:nowrap;">$</div>
<div style="left:1751px;top:672.0px;height:16px;line-height:16px;font-size:11.5px;color:#111;font-weight:normal;white-space:nowrap;">Standard price</div>
<div style="left:1712px;top:692.5px;height:15px;line-height:15px;font-size:11px;color:#2aa8e8;font-weight:normal;white-space:nowrap;">$</div>
<div style="left:1751px;top:692.0px;height:16px;line-height:16px;font-size:11.5px;color:#111;font-weight:normal;white-space:nowrap;">Standard price</div>
<div style="left:1712px;top:728.5px;height:15px;line-height:15px;font-size:11px;color:#2aa8e8;font-weight:normal;white-space:nowrap;">$</div>
<div style="left:1751px;top:728.0px;height:16px;line-height:16px;font-size:11.5px;color:#111;font-weight:normal;white-space:nowrap;">Standard price</div>
<div style="left:1712px;top:764.5px;height:15px;line-height:15px;font-size:11px;color:#2aa8e8;font-weight:normal;white-space:nowrap;">$</div>
<div style="left:1751px;top:764.0px;height:16px;line-height:16px;font-size:11.5px;color:#111;font-weight:normal;white-space:nowrap;">Standard price</div>
<div style="left:1725px;top:800.5px;height:15px;line-height:15px;font-size:11px;color:#f0801e;font-weight:normal;white-space:nowrap;">$</div>
<div style="left:1808px;top:341.0px;width:100px;text-align:right;height:15px;line-height:15px;font-size:11px;color:#222;font-weight:normal;white-space:nowrap;">1,00</div>
<div style="left:1808px;top:376.5px;width:100px;text-align:right;height:15px;line-height:15px;font-size:11px;color:#fff;font-weight:normal;white-space:nowrap;">1,00</div>
<div style="left:1808px;top:412.5px;width:100px;text-align:right;height:15px;line-height:15px;font-size:11px;color:#fff;font-weight:normal;white-space:nowrap;">1,00</div>
<div style="left:1808px;top:432.5px;width:100px;text-align:right;height:15px;line-height:15px;font-size:11px;color:#fff;font-weight:normal;white-space:nowrap;">1,00</div>
<div style="left:1808px;top:452.5px;width:100px;text-align:right;height:15px;line-height:15px;font-size:11px;color:#222;font-weight:normal;white-space:nowrap;">1,00</div>
<div style="left:1808px;top:488.5px;width:100px;text-align:right;height:15px;line-height:15px;font-size:11px;color:#222;font-weight:normal;white-space:nowrap;">1,00</div>
<div style="left:1808px;top:524.5px;width:100px;text-align:right;height:15px;line-height:15px;font-size:11px;color:#222;font-weight:normal;white-space:nowrap;">1,00</div>
<div style="left:1808px;top:561.5px;width:100px;text-align:right;height:15px;line-height:15px;font-size:11px;color:#222;font-weight:normal;white-space:nowrap;">1,00</div>
<div style="left:1808px;top:820.5px;width:100px;text-align:right;height:15px;line-height:15px;font-size:11px;color:#fff;font-weight:normal;white-space:nowrap;">1,00</div>
<div style="left:1808px;top:856.5px;width:100px;text-align:right;height:15px;line-height:15px;font-size:11px;color:#fff;font-weight:normal;white-space:nowrap;">1,00</div>
<div style="left:34px;top:884px;width:1923px;height:17px;background:#fff;border:1px solid #444;border-right:none;"></div>
<div style="left:36px;top:884.5px;height:16px;line-height:16px;font-size:11.5px;color:#222;font-weight:normal;white-space:nowrap;">Settings</div>
<div style="left:42px;top:909px;width:1915px;height:42px;border:1px solid #a8a8a8;border-right:none;"></div>
<div style="left:50px;top:903px;width:93px;height:12px;background:#fff;"></div>
<div style="left:52px;top:902.5px;height:15px;line-height:15px;font-size:11px;color:#333;font-weight:normal;white-space:nowrap;letter-spacing:0.15px;">Calculation model</div>
<div style="left:51px;top:923px;width:347px;height:20px;background:#fff;border:1px solid #b8b8b8;"></div>
<div style="left:380px;top:924px;width:17px;height:18px;background:#f0f0f0;border-left:1px solid #d0d0d0;"></div>
<svg style="left:385px;top:932px;" width="7" height="4" viewBox="0 0 7 4"><path d="M0 0 L7 0 L3.5 4Z" fill="#777"/></svg>
<div style="left:54px;top:925.5px;height:15px;line-height:15px;font-size:11px;color:#222;font-weight:normal;white-space:nowrap;">Find for model</div>
<div style="left:404px;top:922px;width:25px;height:25px;border-right:2px solid #111;border-bottom:2px solid #111;"></div>
<svg style="left:409px;top:928px;" width="15" height="16" viewBox="0 0 15 16"><ellipse cx="7.5" cy="3" rx="6.5" ry="2.6" fill="#fff" stroke="#0f1f2b" stroke-width="1.6"/><path d="M1.5 4 L13.5 4 L9 9 L9 15 L6 15 L6 9Z" fill="#0f1f2b"/></svg>
<svg style="left:435px;top:925px;" width="25" height="21" viewBox="0 0 25 21"><path d="M2 10.5 L22 10.5" stroke="#0f1f2b" stroke-width="3.4" stroke-linecap="round"/><path d="M13 2 L22 10.5 L13 19" fill="none" stroke="#0f1f2b" stroke-width="3.4" stroke-linecap="round" stroke-linejoin="round"/></svg>
<div style="left:479px;top:927.5px;height:15px;line-height:15px;font-size:11px;color:#333;font-weight:normal;white-space:nowrap;letter-spacing:0.3px;">Item :</div>
<div style="left:515px;top:925px;width:324px;height:19px;background:#efefef;border:1px solid #b4bccb;"></div>
<div style="left:517px;top:927.0px;height:15px;line-height:15px;font-size:11px;color:#111;font-weight:normal;white-space:nowrap;">Drainage</div>
<div style="left:847px;top:927.5px;height:15px;line-height:15px;font-size:11px;color:#333;font-weight:normal;white-space:nowrap;letter-spacing:0.1px;">Associated model</div>
<div style="left:935px;top:925px;width:303px;height:19px;background:#efefef;border:1px solid #b4bccb;"></div>
<div style="left:1240px;top:923px;width:25px;height:23px;border-right:2px solid #111;border-bottom:2px solid #111;"></div>
<div style="left:1242.5px;top:926.0px;width:20px;text-align:center;height:16px;line-height:16px;font-size:11.5px;color:#222;font-weight:normal;white-space:nowrap;">X</div>
<div style="left:43px;top:965px;width:561px;height:344px;border:1px solid #a8a8a8;"></div>
<div style="left:49px;top:959px;width:62px;height:12px;background:#fff;"></div>
<div style="left:51px;top:957.5px;height:15px;line-height:15px;font-size:11px;color:#333;font-weight:normal;white-space:nowrap;letter-spacing:0.1px;">Settings list</div>
<div style="left:66px;top:978.0px;height:16px;line-height:16px;font-size:11.5px;color:#222;font-weight:normal;white-space:nowrap;">System</div>
<div style="left:112px;top:975px;width:40px;height:21px;background:#000;"></div>
<div style="left:118px;top:977.5px;height:16px;line-height:16px;font-size:11.5px;color:#fff;font-weight:normal;white-space:nowrap;">Prive</div>
<div style="left:54px;top:996px;width:544px;height:35px;background:#fff;border:1px solid #ddd;border-top:2px solid #666;border-left:2px solid #666;"></div>
<svg style="left:62px;top:1006px;" width="17" height="17" viewBox="0 0 17 17"><rect x="0" y="6.0" width="17" height="5" fill="#0f1f2b"/><rect x="6.0" y="0" width="5" height="17" fill="#0f1f2b"/></svg>
<svg style="left:93px;top:1004px;" width="20" height="20" viewBox="0 0 20 20"><rect x="0" y="3" width="20" height="2.5" fill="#0f1f2b"/><rect x="7" y="0" width="6" height="3" fill="#0f1f2b"/><path d="M2 7 L18 7 L17 20 L3 20Z" fill="#0f1f2b"/><path d="M6.5 9 L6.5 18 M10 9 L10 18 M13.5 9 L13.5 18" stroke="#fff" stroke-width="1.3"/></svg>
<svg style="left:128px;top:1004px;" width="21" height="21" viewBox="0 0 21 21"><ellipse cx="10.5" cy="3.5" rx="9" ry="3" fill="#fff" stroke="#0f1f2b" stroke-width="1.8"/><path d="M2 5 L19 5 L13 12 L13 21 L8 21 L8 12Z" fill="#0f1f2b"/><path d="M8.5 7 L12.5 11 M12.5 7 L8.5 11" stroke="#fff" stroke-width="1.2"/></svg>
<svg style="left:161px;top:1010px;" width="20" height="10" viewBox="0 0 20 10"><rect x="7" y="0" width="13" height="3" fill="#0f1f2b"/><rect x="0" y="5" width="13" height="3" fill="#0f1f2b"/></svg>
<svg style="left:194px;top:1007px;" width="17" height="15" viewBox="0 0 17 15"><path d="M1 0 L1 14 L17 14" fill="none" stroke="#0f1f2b" stroke-width="1.6"/><rect x="4" y="6" width="2" height="7" fill="#0f1f2b"/><rect x="8" y="3" width="2" height="10" fill="#0f1f2b"/><rect x="12" y="7" width="2" height="6" fill="#0f1f2b"/></svg>
<svg style="left:225px;top:1005px;" width="21" height="18" viewBox="0 0 21 18"><rect x="5" y="0" width="11" height="4" fill="#0f1f2b"/><rect x="0" y="5" width="21" height="9" rx="1.5" fill="#0f1f2b"/><rect x="5" y="10" width="11" height="7.5" fill="#fff" stroke="#0f1f2b" stroke-width="1.8"/></svg>
<svg style="left:258px;top:1005px;" width="18" height="18" viewBox="0 0 18 18"><path d="M2.5 8 A7 7 0 0 1 14.5 4.5" fill="none" stroke="#333" stroke-width="2"/><path d="M11.5 1.5 L17 1 L16.5 6.5Z" fill="#333"/><path d="M15.5 10 A7 7 0 0 1 3.5 13.5" fill="none" stroke="#333" stroke-width="2"/><path d="M6.5 16.5 L1 17 L1.5 11.5Z" fill="#333"/></svg>
<svg style="left:289px;top:1004px;" width="21" height="21" viewBox="0 0 21 21"><path d="M2 14 L14 2 L19 7 L7 19 L1 20Z" fill="#0f1f2b"/><path d="M15.5 0.8 Q17 -0.5 18.5 1 L20 2.5 Q21.5 4 20 5.5 L19.8 5.8 L15 1.2Z" fill="#0f1f2b"/></svg>
<svg style="left:321px;top:1004px;" width="20" height="21" viewBox="0 0 20 21"><path d="M5 7 Q9 0 15 4" fill="none" stroke="#aaa" stroke-width="1.6"/><path d="M13 1 L17 4.5 L12.5 6.5Z" fill="#aaa"/><text x="0" y="16" font-size="10" font-family="Liberation Serif" fill="#aaa">a</text><text x="10" y="20" font-size="10" font-family="Liberation Serif" fill="#aaa">b</text></svg>
<svg style="left:356px;top:1004px;" width="18" height="20" viewBox="0 0 18 20"><path d="M5.5 0 L12.5 0 L12.5 8 L17 8 L9 15.5 L1 8 L5.5 8Z" fill="#111"/><rect x="8" y="2" width="2" height="6" fill="#fff"/><rect x="6" y="4" width="6" height="2" fill="#fff"/><rect x="1" y="17.5" width="16" height="2" fill="#111"/></svg>
<div style="left:53px;top:1033px;width:545px;height:256px;background:#fff;border-left:1px solid #808080;"></div>
<div style="left:54px;top:1033px;width:527px;height:20px;background:#222a36;"></div>
<div style="left:73px;top:1033px;width:1px;height:20px;background:#b8bcc4;"></div>
<div style="left:168px;top:1033px;width:1px;height:20px;background:#b8bcc4;"></div>
<div style="left:428px;top:1033px;width:1px;height:20px;background:#b8bcc4;"></div>
<div style="left:478px;top:1033px;width:1px;height:20px;background:#b8bcc4;"></div>
<div style="left:578px;top:1033px;width:1px;height:20px;background:#b8bcc4;"></div>
<div style="left:-29.0px;top:1035.0px;width:300px;text-align:center;height:16px;line-height:16px;font-size:12px;color:#fff;font-weight:bold;white-space:nowrap;">Code</div>
<div style="left:147.5px;top:1035.0px;width:300px;text-align:center;height:16px;line-height:16px;font-size:12px;color:#fff;font-weight:bold;white-space:nowrap;">Default Name</div>
<div style="left:429px;top:1035.0px;height:16px;line-height:16px;font-size:12px;color:#fff;font-weight:bold;white-space:nowrap;letter-spacing:-0.2px;">efault un</div>
<div style="left:379.0px;top:1035.0px;width:300px;text-align:center;height:16px;line-height:16px;font-size:12px;color:#fff;font-weight:bold;white-space:nowrap;letter-spacing:-0.3px;"><u>Favourites</u></div>
<div style="left:74px;top:1053px;width:507px;height:20px;background:#def3f3;"></div>
<div style="left:54px;top:1053px;width:19px;height:234px;background:#efefef;"></div>
<div style="left:54px;top:1053px;width:19px;height:1px;background:#6e6e6e;"></div>
<div style="left:54px;top:1072px;width:19px;height:1px;background:#6e6e6e;"></div>
<div style="left:54px;top:1092px;width:19px;height:1px;background:#6e6e6e;"></div>
<div style="left:54px;top:1112px;width:19px;height:1px;background:#6e6e6e;"></div>
<div style="left:54px;top:1132px;width:19px;height:1px;background:#6e6e6e;"></div>
<div style="left:54px;top:1152px;width:19px;height:1px;background:#6e6e6e;"></div>
<div style="left:54px;top:1172px;width:19px;height:1px;background:#6e6e6e;"></div>
<div style="left:54px;top:1192px;width:19px;height:1px;background:#6e6e6e;"></div>
<div style="left:54px;top:1212px;width:19px;height:1px;background:#6e6e6e;"></div>
<div style="left:54px;top:1232px;width:19px;height:1px;background:#6e6e6e;"></div>
<div style="left:54px;top:1252px;width:19px;height:1px;background:#6e6e6e;"></div>
<div style="left:54px;top:1272px;width:19px;height:1px;background:#6e6e6e;"></div>
<div style="left:73px;top:1053px;width:1px;height:234px;background:#9a9a9a;"></div>
<svg style="left:522px;top:1056px;" width="13" height="13" viewBox="0 0 13 13"><rect x="0.5" y="0.5" width="12" height="12" fill="#fff" stroke="#888"/><rect x="2.5" y="2.5" width="8" height="8" fill="#1a78c8" stroke="#0a4a8a" stroke-width="0.6"/></svg>
<div style="left:74px;top:1073px;width:507px;height:19px;background:#0078d7;"></div>
<div style="left:74px;top:1073px;width:507px;height:19px;overflow:hidden;">
<div style="left:0;top:0;width:94px;height:19px;overflow:hidden;">
<div style="left:3px;top:0.5999999999999996px;height:16px;line-height:16px;font-size:11.5px;color:#fff;font-weight:normal;white-space:nowrap;letter-spacing:-0.15px;">BeamLen</div>
</div>
<div style="left:98px;top:0.5999999999999996px;height:16px;line-height:16px;font-size:11.5px;color:#fff;font-weight:normal;white-space:nowrap;">Beam Length</div>
<div style="left:357.5px;top:0.5999999999999996px;height:16px;line-height:16px;font-size:11.5px;color:#fff;font-weight:normal;white-space:nowrap;">ft</div>
<svg style="left:448px;top:3px;" width="13" height="13" viewBox="0 0 13 13"><rect x="0.5" y="0.5" width="12" height="12" fill="#f4f4f6" stroke="#8a8a8a"/><path d="M3 6.5 L5.5 10 L10 2.5" fill="none" stroke="#3a5aa8" stroke-width="1.8"/></svg>
</div>
<div style="left:74px;top:1112px;width:507px;height:1px;background:#ececf0;"></div>
<div style="left:74px;top:1093px;width:507px;height:19px;overflow:hidden;">
<div style="left:0;top:0;width:94px;height:19px;overflow:hidden;">
<div style="left:3px;top:0.5999999999999996px;height:16px;line-height:16px;font-size:11.5px;color:#111;font-weight:normal;white-space:nowrap;letter-spacing:-0.15px;">BeamWid</div>
</div>
<div style="left:98px;top:0.5999999999999996px;height:16px;line-height:16px;font-size:11.5px;color:#111;font-weight:normal;white-space:nowrap;">Beam Width</div>
<div style="left:357.5px;top:0.5999999999999996px;height:16px;line-height:16px;font-size:11.5px;color:#111;font-weight:normal;white-space:nowrap;">in</div>
<svg style="left:448px;top:3px;" width="13" height="13" viewBox="0 0 13 13"><rect x="0.5" y="0.5" width="12" height="12" fill="#f4f4f6" stroke="#8a8a8a"/></svg>
</div>
<div style="left:74px;top:1132px;width:507px;height:1px;background:#ececf0;"></div>
<div style="left:74px;top:1113px;width:507px;height:19px;overflow:hidden;">
<div style="left:0;top:0;width:94px;height:19px;overflow:hidden;">
<div style="left:3px;top:0.5999999999999996px;height:16px;line-height:16px;font-size:11.5px;color:#111;font-weight:normal;white-space:nowrap;letter-spacing:-0.15px;">BeamDep</div>
</div>
<div style="left:98px;top:0.5999999999999996px;height:16px;line-height:16px;font-size:11.5px;color:#111;font-weight:normal;white-space:nowrap;">Beam Depth</div>
<div style="left:357.5px;top:0.5999999999999996px;height:16px;line-height:16px;font-size:11.5px;color:#111;font-weight:normal;white-space:nowrap;">in</div>
<svg style="left:448px;top:3px;" width="13" height="13" viewBox="0 0 13 13"><rect x="0.5" y="0.5" width="12" height="12" fill="#f4f4f6" stroke="#8a8a8a"/><path d="M3 6.5 L5.5 10 L10 2.5" fill="none" stroke="#3a5aa8" stroke-width="1.8"/></svg>
</div>
<div style="left:74px;top:1152px;width:507px;height:1px;background:#ececf0;"></div>
<div style="left:74px;top:1133px;width:507px;height:19px;overflow:hidden;">
<div style="left:0;top:0;width:94px;height:19px;overflow:hidden;">
<div style="left:3px;top:0.5999999999999996px;height:16px;line-height:16px;font-size:11.5px;color:#111;font-weight:normal;white-space:nowrap;letter-spacing:-0.15px;">WallExtFinHght</div>
</div>
<div style="left:98px;top:0.5999999999999996px;height:16px;line-height:16px;font-size:11.5px;color:#111;font-weight:normal;white-space:nowrap;">Wall Exterior Finish Height</div>
<div style="left:357.5px;top:0.5999999999999996px;height:16px;line-height:16px;font-size:11.5px;color:#111;font-weight:normal;white-space:nowrap;">ft</div>
<svg style="left:448px;top:3px;" width="13" height="13" viewBox="0 0 13 13"><rect x="0.5" y="0.5" width="12" height="12" fill="#f4f4f6" stroke="#8a8a8a"/><path d="M3 6.5 L5.5 10 L10 2.5" fill="none" stroke="#3a5aa8" stroke-width="1.8"/></svg>
</div>
<div style="left:74px;top:1172px;width:507px;height:1px;background:#ececf0;"></div>
<div style="left:74px;top:1153px;width:507px;height:19px;overflow:hidden;">
<div style="left:0;top:0;width:94px;height:19px;overflow:hidden;">
<div style="left:3px;top:0.5999999999999996px;height:16px;line-height:16px;font-size:11.5px;color:#111;font-weight:normal;white-space:nowrap;letter-spacing:-0.15px;">WallIntFinHght</div>
</div>
<div style="left:98px;top:0.5999999999999996px;height:16px;line-height:16px;font-size:11.5px;color:#111;font-weight:normal;white-space:nowrap;">Wall Interior Finish Height</div>
<div style="left:357.5px;top:0.5999999999999996px;height:16px;line-height:16px;font-size:11.5px;color:#111;font-weight:normal;white-space:nowrap;">ft</div>
<svg style="left:448px;top:3px;" width="13" height="13" viewBox="0 0 13 13"><rect x="0.5" y="0.5" width="12" height="12" fill="#f4f4f6" stroke="#8a8a8a"/><path d="M3 6.5 L5.5 10 L10 2.5" fill="none" stroke="#3a5aa8" stroke-width="1.8"/></svg>
</div>
<div style="left:74px;top:1192px;width:507px;height:1px;background:#ececf0;"></div>
<div style="left:74px;top:1173px;width:507px;height:19px;overflow:hidden;">
<div style="left:0;top:0;width:94px;height:19px;overflow:hidden;">
<div style="left:3px;top:0.5999999999999996px;height:16px;line-height:16px;font-size:11.5px;color:#111;font-weight:normal;white-space:nowrap;letter-spacing:-0.15px;">WallFrmLen</div>
</div>
<div style="left:98px;top:0.5999999999999996px;height:16px;line-height:16px;font-size:11.5px;color:#111;font-weight:normal;white-space:nowrap;">Wall Framing Length</div>
<div style="left:357.5px;top:0.5999999999999996px;height:16px;line-height:16px;font-size:11.5px;color:#111;font-weight:normal;white-space:nowrap;">ft</div>
<svg style="left:448px;top:3px;" width="13" height="13" viewBox="0 0 13 13"><rect x="0.5" y="0.5" width="12" height="12" fill="#f4f4f6" stroke="#8a8a8a"/><path d="M3 6.5 L5.5 10 L10 2.5" fill="none" stroke="#3a5aa8" stroke-width="1.8"/></svg>
</div>
<div style="left:74px;top:1212px;width:507px;height:1px;background:#ececf0;"></div>
<div style="left:74px;top:1193px;width:507px;height:19px;overflow:hidden;">
<div style="left:0;top:0;width:94px;height:19px;overflow:hidden;">
<div style="left:3px;top:0.5999999999999996px;height:16px;line-height:16px;font-size:11.5px;color:#111;font-weight:normal;white-space:nowrap;letter-spacing:-0.15px;">WallExtInsNetSurf</div>
</div>
<div style="left:98px;top:0.5999999999999996px;height:16px;line-height:16px;font-size:11.5px;color:#111;font-weight:normal;white-space:nowrap;">Wall Exterior Insulation Net Surface</div>
<div style="left:357.5px;top:0.5999999999999996px;height:16px;line-height:16px;font-size:11.5px;color:#111;font-weight:normal;white-space:nowrap;">ft2</div>
<svg style="left:448px;top:3px;" width="13" height="13" viewBox="0 0 13 13"><rect x="0.5" y="0.5" width="12" height="12" fill="#f4f4f6" stroke="#8a8a8a"/><path d="M3 6.5 L5.5 10 L10 2.5" fill="none" stroke="#3a5aa8" stroke-width="1.8"/></svg>
</div>
<div style="left:74px;top:1232px;width:507px;height:1px;background:#ececf0;"></div>
<div style="left:74px;top:1213px;width:507px;height:19px;overflow:hidden;">
<div style="left:0;top:0;width:94px;height:19px;overflow:hidden;">
<div style="left:3px;top:0.5999999999999996px;height:16px;line-height:16px;font-size:11.5px;color:#111;font-weight:normal;white-space:nowrap;letter-spacing:-0.15px;">WallExtFinNetSurf</div>
</div>
<div style="left:98px;top:0.5999999999999996px;height:16px;line-height:16px;font-size:11.5px;color:#111;font-weight:normal;white-space:nowrap;">Wall Exterior Finish Net Surface</div>
<div style="left:357.5px;top:0.5999999999999996px;height:16px;line-height:16px;font-size:11.5px;color:#111;font-weight:normal;white-space:nowrap;">ft2</div>
<svg style="left:448px;top:3px;" width="13" height="13" viewBox="0 0 13 13"><rect x="0.5" y="0.5" width="12" height="12" fill="#f4f4f6" stroke="#8a8a8a"/><path d="M3 6.5 L5.5 10 L10 2.5" fill="none" stroke="#3a5aa8" stroke-width="1.8"/></svg>
</div>
<div style="left:74px;top:1252px;width:507px;height:1px;background:#ececf0;"></div>
<div style="left:74px;top:1233px;width:507px;height:19px;overflow:hidden;">
<div style="left:0;top:0;width:94px;height:19px;overflow:hidden;">
<div style="left:3px;top:0.5999999999999996px;height:16px;line-height:16px;font-size:11.5px;color:#111;font-weight:normal;white-space:nowrap;letter-spacing:-0.15px;">%Prop</div>
</div>
<div style="left:98px;top:0.5999999999999996px;height:16px;line-height:16px;font-size:11.5px;color:#111;font-weight:normal;white-space:nowrap;">Percentage of Proportions</div>
<div style="left:357.5px;top:0.5999999999999996px;height:16px;line-height:16px;font-size:11.5px;color:#111;font-weight:normal;white-space:nowrap;">ft2</div>
<svg style="left:448px;top:3px;" width="13" height="13" viewBox="0 0 13 13"><rect x="0.5" y="0.5" width="12" height="12" fill="#f4f4f6" stroke="#8a8a8a"/><path d="M3 6.5 L5.5 10 L10 2.5" fill="none" stroke="#3a5aa8" stroke-width="1.8"/></svg>
</div>
<div style="left:74px;top:1272px;width:507px;height:1px;background:#ececf0;"></div>
<div style="left:74px;top:1253px;width:507px;height:19px;overflow:hidden;">
<div style="left:0;top:0;width:94px;height:19px;overflow:hidden;">
<div style="left:3px;top:0.5999999999999996px;height:16px;line-height:16px;font-size:11.5px;color:#111;font-weight:normal;white-space:nowrap;letter-spacing:-0.15px;">WallIntFinNetSurf</div>
</div>
<div style="left:98px;top:0.5999999999999996px;height:16px;line-height:16px;font-size:11.5px;color:#111;font-weight:normal;white-space:nowrap;">Wall Interior Finish Net Surface</div>
<div style="left:357.5px;top:0.5999999999999996px;height:16px;line-height:16px;font-size:11.5px;color:#111;font-weight:normal;white-space:nowrap;">ft2</div>
<svg style="left:448px;top:3px;" width="13" height="13" viewBox="0 0 13 13"><rect x="0.5" y="0.5" width="12" height="12" fill="#f4f4f6" stroke="#8a8a8a"/><path d="M3 6.5 L5.5 10 L10 2.5" fill="none" stroke="#3a5aa8" stroke-width="1.8"/></svg>
</div>
<div style="left:74px;top:1292px;width:507px;height:1px;background:#ececf0;"></div>
<div style="left:74px;top:1273px;width:507px;height:14px;overflow:hidden;">
<div style="left:0;top:0;width:94px;height:19px;overflow:hidden;">
<div style="left:3px;top:0.5999999999999996px;height:16px;line-height:16px;font-size:11.5px;color:#111;font-weight:normal;white-space:nowrap;letter-spacing:-0.15px;">WallFrmLenAss</div>
</div>
<div style="left:98px;top:0.5999999999999996px;height:16px;line-height:16px;font-size:11.5px;color:#111;font-weight:normal;white-space:nowrap;">Wall Framing Length Assembly</div>
<div style="left:357.5px;top:0.5999999999999996px;height:16px;line-height:16px;font-size:11.5px;color:#111;font-weight:normal;white-space:nowrap;">ft</div>
<svg style="left:448px;top:3px;" width="13" height="13" viewBox="0 0 13 13"><rect x="0.5" y="0.5" width="12" height="12" fill="#f4f4f6" stroke="#8a8a8a"/><path d="M3 6.5 L5.5 10 L10 2.5" fill="none" stroke="#3a5aa8" stroke-width="1.8"/></svg>
</div>
<div style="left:168px;top:1073px;width:1px;height:214px;background:#e4e4e8;"></div>
<div style="left:428px;top:1073px;width:1px;height:214px;background:#e4e4e8;"></div>
<div style="left:478px;top:1073px;width:1px;height:214px;background:#e4e4e8;"></div>
<div style="left:578px;top:1073px;width:1px;height:214px;background:#e4e4e8;"></div>
<div style="left:581px;top:1033px;width:17px;height:254px;background:#f0f0f0;"></div>
<div style="left:582px;top:1050px;width:15px;height:17px;background:#cdcdcd;"></div>
<svg style="left:585px;top:1039px;" width="9" height="6" viewBox="0 0 9 6"><path d="M0.5 5.5 L4.5 1 L8.5 5.5" fill="none" stroke="#555" stroke-width="1.3"/></svg>
<svg style="left:585px;top:1275px;" width="9" height="6" viewBox="0 0 9 6"><path d="M0.5 0.5 L4.5 5 L8.5 0.5" fill="none" stroke="#555" stroke-width="1.3"/></svg>
<div style="left:55px;top:1287px;width:543px;height:17px;background:#f0f0f0;"></div>
<div style="left:71px;top:1288px;width:357px;height:15px;background:#cdcdcd;"></div>
<svg style="left:60px;top:1291px;" width="6" height="9" viewBox="0 0 6 9"><path d="M5.5 0.5 L1 4.5 L5.5 8.5" fill="none" stroke="#555" stroke-width="1.3"/></svg>
<svg style="left:570px;top:1291px;" width="6" height="9" viewBox="0 0 6 9"><path d="M0.5 0.5 L5 4.5 L0.5 8.5" fill="none" stroke="#555" stroke-width="1.3"/></svg>
<div style="left:54px;top:1304px;width:544px;height:1px;background:#999;"></div>
<div style="left:597px;top:1033px;width:1px;height:272px;background:#999;"></div>
<svg style="left:614px;top:1033px;" width="28" height="23" viewBox="0 0 28 23"><path d="M2 11.5 L25 11.5" stroke="#0f1f2b" stroke-width="3.6" stroke-linecap="round"/><path d="M15 2.5 L25 11.5 L15 20.5" fill="none" stroke="#0f1f2b" stroke-width="3.6" stroke-linecap="round" stroke-linejoin="round"/></svg>
<svg style="left:614px;top:1073px;" width="28" height="23" viewBox="0 0 28 23"><path d="M3 11.5 L26 11.5" stroke="#666" stroke-width="3.4" stroke-linecap="round"/><path d="M13 2.5 L3 11.5 L13 20.5" fill="none" stroke="#666" stroke-width="3.4" stroke-linecap="round" stroke-linejoin="round"/></svg>
<div style="left:651px;top:955px;width:3px;height:370px;background:#000;"></div>
<div style="left:1916px;top:955px;width:3px;height:370px;background:#000;"></div>
<div style="left:663px;top:965px;width:1233px;height:345px;border:1px solid #a8a8a8;"></div>
<div style="left:669px;top:959px;width:68px;height:12px;background:#fff;"></div>
<div style="left:671px;top:957.5px;height:15px;line-height:15px;font-size:11px;color:#333;font-weight:normal;white-space:nowrap;letter-spacing:0.1px;">Item settings</div>
<div style="left:674px;top:980px;width:1212px;height:34px;background:#fff;border:1px solid #ddd;border-top:2px solid #666;border-left:2px solid #666;"></div>
<svg style="left:686px;top:988px;" width="18" height="18" viewBox="0 0 18 18"><rect x="0" y="6.5" width="18" height="5" fill="#0f1f2b"/><rect x="6.5" y="0" width="5" height="18" fill="#0f1f2b"/></svg>
<svg style="left:721px;top:987px;" width="20" height="20" viewBox="0 0 20 20"><rect x="0" y="3" width="20" height="2.5" fill="#777"/><rect x="7" y="0" width="6" height="3" fill="#777"/><path d="M2 7 L18 7 L17 20 L3 20Z" fill="#777"/><path d="M6.5 9 L6.5 18 M10 9 L10 18 M13.5 9 L13.5 18" stroke="#fff" stroke-width="1.3"/></svg>
<svg style="left:759px;top:987px;" width="16" height="21" viewBox="0 0 16 21"><rect x="0" y="0" width="16" height="1.8" fill="#1a1a1a"/><path d="M8 3 L8 21" stroke="#1a1a1a" stroke-width="1.8"/><path d="M1.5 9.5 L8 3 L14.5 9.5" fill="none" stroke="#1a1a1a" stroke-width="1.8"/></svg>
<svg style="left:791px;top:988px;" width="16" height="20" viewBox="0 0 16 20"><path d="M8 1 L8 20" stroke="#1a1a1a" stroke-width="1.8"/><path d="M1.5 7.5 L8 1 L14.5 7.5" fill="none" stroke="#1a1a1a" stroke-width="1.8"/></svg>
<svg style="left:823px;top:988px;" width="16" height="20" viewBox="0 0 16 20"><path d="M8 0 L8 19" stroke="#1a1a1a" stroke-width="1.8"/><path d="M1.5 12.5 L8 19 L14.5 12.5" fill="none" stroke="#1a1a1a" stroke-width="1.8"/></svg>
<svg style="left:855px;top:987px;" width="16" height="21" viewBox="0 0 16 21"><path d="M8 0 L8 17" stroke="#1a1a1a" stroke-width="1.8"/><path d="M1.5 10.5 L8 17 L14.5 10.5" fill="none" stroke="#1a1a1a" stroke-width="1.8"/><rect x="0" y="19" width="16" height="1.8" fill="#1a1a1a"/></svg>
<svg style="left:888px;top:987px;" width="21" height="21" viewBox="0 0 21 21"><ellipse cx="10.5" cy="3.5" rx="9" ry="3" fill="#fff" stroke="#0f1f2b" stroke-width="1.8"/><path d="M2 5 L19 5 L13 12 L13 21 L8 21 L8 12Z" fill="#0f1f2b"/><path d="M8.5 7 L12.5 11 M12.5 7 L8.5 11" stroke="#fff" stroke-width="1.2"/></svg>
<svg style="left:921px;top:993px;" width="20" height="10" viewBox="0 0 20 10"><rect x="7" y="0" width="13" height="3" fill="#0f1f2b"/><rect x="0" y="5" width="13" height="3" fill="#0f1f2b"/></svg>
<svg style="left:955px;top:990px;" width="17" height="15" viewBox="0 0 17 15"><path d="M1 0 L1 14 L17 14" fill="none" stroke="#0f1f2b" stroke-width="1.6"/><rect x="4" y="6" width="2" height="7" fill="#0f1f2b"/><rect x="8" y="3" width="2" height="10" fill="#0f1f2b"/><rect x="12" y="7" width="2" height="6" fill="#0f1f2b"/></svg>
<svg style="left:987px;top:988px;" width="20" height="19" viewBox="0 0 20 19"><text x="1" y="15" font-size="15" font-style="italic" font-family="Liberation Serif" fill="#444">fx</text><path d="M0 10 L19 10" stroke="#444" stroke-width="1"/></svg>
<svg style="left:1018px;top:990px;" width="20" height="14" viewBox="0 0 20 14"><rect x="0" y="0" width="20" height="4.5" fill="#0f1f2b"/><rect x="0" y="8" width="20" height="4.5" fill="#0f1f2b"/></svg>
<svg style="left:1049px;top:987px;" width="21" height="21" viewBox="0 0 21 21"><path d="M1 1 L13 1 Q19 1 19 8 L19 17" fill="none" stroke="#0f1f2b" stroke-width="1.5"/><path d="M1 1 L1 19" stroke="#0f1f2b" stroke-width="1.5"/><rect x="0" y="18" width="21" height="2.5" fill="#0f1f2b"/></svg>
<svg style="left:1084px;top:988px;" width="17" height="17" viewBox="0 0 17 17"><path d="M1 1 L13 1 L16 4 L16 16 L1 16Z" fill="none" stroke="#0f1f2b" stroke-width="1.8"/><rect x="4" y="1" width="7" height="5" fill="none" stroke="#0f1f2b" stroke-width="1.6"/><rect x="3.5" y="9" width="9" height="7" fill="none" stroke="#0f1f2b" stroke-width="1.3"/></svg>
<svg style="left:1112.3000000000002px;top:989.0px;" width="23.1" height="16.0" viewBox="0 0 23.1 16.0"><polyline points="6.69,4.97 3.96,8.00 7.60,12.04 10.33,9.01" stroke="#f5821f" stroke-width="2.8" stroke-linejoin="miter" stroke-miterlimit="10" fill="none"/><polyline points="15.50,12.04 19.14,8.00 15.50,3.96 12.77,6.99" stroke="#f5821f" stroke-width="2.8" stroke-linejoin="miter" stroke-miterlimit="10" fill="none"/><polyline points="6.87,4.77 7.60,3.96 15.50,12.04 16.23,11.23" stroke="#fff" stroke-width="4.199999999999999" stroke-linejoin="miter" stroke-miterlimit="10" fill="none"/><polyline points="6.87,4.77 7.60,3.96 15.50,12.04 16.23,11.23" stroke="#f5821f" stroke-width="2.8" stroke-linejoin="miter" stroke-miterlimit="10" fill="none"/><polyline points="15.50,12.04 19.14,8.00" stroke="#f5821f" stroke-width="2.8" stroke-linejoin="miter" stroke-miterlimit="10" fill="none"/></svg>
<svg style="left:1147px;top:987px;" width="18" height="21" viewBox="0 0 18 21"><path d="M3 19 L1 19 L1 2 L9 2" fill="none" stroke="#777" stroke-width="1.4"/><path d="M4.5 5 L12 5 L16.5 9.5 L16.5 20 L4.5 20Z" fill="none" stroke="#777" stroke-width="1.5"/></svg>
<svg style="left:1179px;top:988px;" width="17" height="19" viewBox="0 0 17 19"><path d="M3 16 L1 16 L1 2 L5 2 M11 2 L14 2 L14 6" fill="none" stroke="#aaa" stroke-width="1.3"/><rect x="4.5" y="0.5" width="7" height="3" fill="none" stroke="#aaa" stroke-width="1.2"/><path d="M6 7 L12 7 L16 11 L16 18.5 L6 18.5Z" fill="none" stroke="#aaa" stroke-width="1.3"/></svg>
<svg style="left:1211px;top:987px;" width="19" height="20" viewBox="0 0 19 20"><path d="M9 10 L17 1.5 L19 3.5 L11 12Z" fill="#999"/><path d="M1 18 Q3 10 9 10 L11 12 Q10 18 1 19Z" fill="#aaa"/></svg>
<svg style="left:1241px;top:988px;" width="20" height="21" viewBox="0 0 20 21"><path d="M5 7 Q9 0 15 4" fill="none" stroke="#333" stroke-width="1.6"/><path d="M13 1 L17 4.5 L12.5 6.5Z" fill="#333"/><text x="0" y="16" font-size="10" font-family="Liberation Serif" fill="#333">a</text><text x="10" y="20" font-size="10" font-family="Liberation Serif" fill="#333">b</text></svg>
<div style="left:674px;top:1015px;width:1213px;height:291px;background:#ababab;border:1px solid #808080;"></div>
<div style="left:674px;top:1016px;width:706px;height:20px;background:#222a36;"></div>
<div style="left:694px;top:1016px;width:1px;height:20px;background:#b8bcc4;"></div>
<div style="left:812px;top:1016px;width:1px;height:20px;background:#b8bcc4;"></div>
<div style="left:1031px;top:1016px;width:1px;height:20px;background:#b8bcc4;"></div>
<div style="left:1081px;top:1016px;width:1px;height:20px;background:#b8bcc4;"></div>
<div style="left:1169px;top:1016px;width:1px;height:20px;background:#b8bcc4;"></div>
<div style="left:1219px;top:1016px;width:1px;height:20px;background:#b8bcc4;"></div>
<div style="left:1269px;top:1016px;width:1px;height:20px;background:#b8bcc4;"></div>
<div style="left:603.0px;top:1017.5px;width:300px;text-align:center;height:16px;line-height:16px;font-size:12px;color:#fff;font-weight:bold;white-space:nowrap;letter-spacing:-0.2px;">Code</div>
<div style="left:771.5px;top:1017.5px;width:300px;text-align:center;height:16px;line-height:16px;font-size:12px;color:#fff;font-weight:bold;white-space:nowrap;letter-spacing:-0.2px;">Param. name / Options</div>
<div style="left:906.0px;top:1017.5px;width:300px;text-align:center;height:16px;line-height:16px;font-size:12px;color:#fff;font-weight:bold;white-space:nowrap;letter-spacing:-0.2px;">Option</div>
<div style="left:975.5px;top:1017.5px;width:300px;text-align:center;height:16px;line-height:16px;font-size:12px;color:#fff;font-weight:bold;white-space:nowrap;letter-spacing:-0.2px;"><u>Value</u></div>
<div style="left:1044.5px;top:1017.5px;width:300px;text-align:center;height:16px;line-height:16px;font-size:12px;color:#fff;font-weight:bold;white-space:nowrap;letter-spacing:-0.2px;">Unit</div>
<div style="left:1175.0px;top:1017.5px;width:300px;text-align:center;height:16px;line-height:16px;font-size:12px;color:#fff;font-weight:bold;white-space:nowrap;letter-spacing:-0.2px;">TakeOff</div>
<div style="left:1220px;top:1017.5px;height:16px;line-height:16px;font-size:12px;color:#fff;font-weight:bold;white-space:nowrap;letter-spacing:-0.5px;"><u>Constan</u></div>
<div style="left:674px;top:1036px;width:706px;height:120px;background:#fff;"></div>
<div style="left:694px;top:1036px;width:686px;height:20px;background:#def3f3;"></div>
<div style="left:674px;top:1036px;width:20px;height:120px;background:#efefef;"></div>
<div style="left:674px;top:1055px;width:20px;height:1px;background:#6e6e6e;"></div>
<div style="left:674px;top:1075px;width:20px;height:1px;background:#6e6e6e;"></div>
<div style="left:674px;top:1095px;width:20px;height:1px;background:#6e6e6e;"></div>
<div style="left:674px;top:1115px;width:20px;height:1px;background:#6e6e6e;"></div>
<div style="left:674px;top:1135px;width:20px;height:1px;background:#6e6e6e;"></div>
<div style="left:674px;top:1155px;width:20px;height:1px;background:#6e6e6e;"></div>
<div style="left:693px;top:1036px;width:1px;height:120px;background:#9a9a9a;"></div>
<svg style="left:1238px;top:1039px;" width="13" height="13" viewBox="0 0 13 13"><rect x="0.5" y="0.5" width="12" height="12" fill="#fff" stroke="#888"/><rect x="2.5" y="2.5" width="8" height="8" fill="#1a78c8" stroke="#0a4a8a" stroke-width="0.6"/></svg>
<div style="left:694px;top:1056px;width:686px;height:2px;background:#000;"></div>
<div style="left:694px;top:1073px;width:686px;height:2px;background:#000;"></div>
<div style="left:697px;top:1057.5px;height:16px;line-height:16px;font-size:11.5px;color:#111;font-weight:normal;white-space:nowrap;">Q</div>
<div style="left:816px;top:1057.5px;height:16px;line-height:16px;font-size:11.5px;color:#111;font-weight:normal;white-space:nowrap;">Quantity</div>
<div style="left:1035px;top:1057.5px;height:16px;line-height:16px;font-size:11.5px;color:#111;font-weight:normal;white-space:nowrap;">Non</div>
<div style="left:1066px;top:1057.5px;width:100px;text-align:right;height:16px;line-height:16px;font-size:12px;color:#111;font-weight:bold;white-space:nowrap;">1,00</div>
<div style="left:1173px;top:1057.5px;height:16px;line-height:16px;font-size:11.5px;color:#111;font-weight:normal;white-space:nowrap;">unit</div>
<svg style="left:1238px;top:1059.0px;" width="13" height="13" viewBox="0 0 13 13"><rect x="0.5" y="0.5" width="12" height="12" fill="#f4f4f6" stroke="#8a8a8a"/></svg>
<div style="left:694px;top:1095px;width:686px;height:1px;background:#ececf0;"></div>
<div style="left:697px;top:1076.7px;height:16px;line-height:16px;font-size:11.5px;color:#111;font-weight:normal;white-space:nowrap;">FQ</div>
<div style="left:816px;top:1076.7px;height:16px;line-height:16px;font-size:11.5px;color:#111;font-weight:normal;white-space:nowrap;">Final Quantity</div>
<div style="left:1035px;top:1076.7px;height:16px;line-height:16px;font-size:11.5px;color:#111;font-weight:normal;white-space:nowrap;">Non</div>
<div style="left:1066px;top:1076.7px;width:100px;text-align:right;height:16px;line-height:16px;font-size:11.5px;color:#111;font-weight:normal;white-space:nowrap;"><u>1,00</u></div>
<div style="left:1173px;top:1076.7px;height:16px;line-height:16px;font-size:11.5px;color:#111;font-weight:normal;white-space:nowrap;">unit</div>
<svg style="left:1238px;top:1078.2px;" width="13" height="13" viewBox="0 0 13 13"><rect x="0.5" y="0.5" width="12" height="12" fill="#f4f4f6" stroke="#8a8a8a"/></svg>
<div style="left:1082px;top:1096px;width:87px;height:19px;background:#fdf6e3;"></div>
<div style="left:694px;top:1115px;width:686px;height:1px;background:#ececf0;"></div>
<div style="left:697px;top:1096.7px;height:16px;line-height:16px;font-size:11.5px;color:#111;font-weight:normal;white-space:nowrap;">Lgth</div>
<div style="left:816px;top:1096.7px;height:16px;line-height:16px;font-size:11.5px;color:#111;font-weight:normal;white-space:nowrap;">Lenght</div>
<div style="left:1035px;top:1096.7px;height:16px;line-height:16px;font-size:11.5px;color:#111;font-weight:normal;white-space:nowrap;">Validatio</div>
<div style="left:1066px;top:1096.7px;width:100px;text-align:right;height:16px;line-height:16px;font-size:11.5px;color:#111;font-weight:normal;white-space:nowrap;"><u>0,00</u></div>
<div style="left:1173px;top:1096.7px;height:16px;line-height:16px;font-size:11.5px;color:#111;font-weight:normal;white-space:nowrap;">ft</div>
<svg style="left:1238px;top:1098.2px;" width="13" height="13" viewBox="0 0 13 13"><rect x="0.5" y="0.5" width="12" height="12" fill="#f4f4f6" stroke="#8a8a8a"/></svg>
<div style="left:1082px;top:1116px;width:87px;height:19px;background:#fdf6e3;"></div>
<div style="left:694px;top:1135px;width:686px;height:1px;background:#ececf0;"></div>
<div style="left:697px;top:1116.7px;height:16px;line-height:16px;font-size:11.5px;color:#111;font-weight:normal;white-space:nowrap;">Vol</div>
<div style="left:816px;top:1116.7px;height:16px;line-height:16px;font-size:11.5px;color:#111;font-weight:normal;white-space:nowrap;">Material Volume For Items</div>
<div style="left:1035px;top:1116.7px;height:16px;line-height:16px;font-size:11.5px;color:#111;font-weight:normal;white-space:nowrap;">Validatio</div>
<div style="left:1066px;top:1116.7px;width:100px;text-align:right;height:16px;line-height:16px;font-size:11.5px;color:#111;font-weight:normal;white-space:nowrap;"><u>0,00</u></div>
<div style="left:1173px;top:1116.7px;height:16px;line-height:16px;font-size:11.5px;color:#111;font-weight:normal;white-space:nowrap;">m3</div>
<svg style="left:1238px;top:1118.2px;" width="13" height="13" viewBox="0 0 13 13"><rect x="0.5" y="0.5" width="12" height="12" fill="#f4f4f6" stroke="#8a8a8a"/></svg>
<div style="left:1082px;top:1136px;width:87px;height:19px;background:#fdf6e3;"></div>
<div style="left:694px;top:1155px;width:686px;height:1px;background:#ececf0;"></div>
<div style="left:697px;top:1136.7px;height:16px;line-height:16px;font-size:11.5px;color:#111;font-weight:normal;white-space:nowrap;">Surf</div>
<div style="left:816px;top:1136.7px;height:16px;line-height:16px;font-size:11.5px;color:#111;font-weight:normal;white-space:nowrap;">Surface For Items</div>
<div style="left:1035px;top:1136.7px;height:16px;line-height:16px;font-size:11.5px;color:#111;font-weight:normal;white-space:nowrap;">Validatio</div>
<div style="left:1066px;top:1136.7px;width:100px;text-align:right;height:16px;line-height:16px;font-size:11.5px;color:#111;font-weight:normal;white-space:nowrap;"><u>0,00</u></div>
<div style="left:1173px;top:1136.7px;height:16px;line-height:16px;font-size:11.5px;color:#111;font-weight:normal;white-space:nowrap;">ft2</div>
<svg style="left:1238px;top:1138.2px;" width="13" height="13" viewBox="0 0 13 13"><rect x="0.5" y="0.5" width="12" height="12" fill="#f4f4f6" stroke="#8a8a8a"/></svg>
<div style="left:812px;top:1075px;width:1px;height:81px;background:#e4e4e8;"></div>
<div style="left:1031px;top:1075px;width:1px;height:81px;background:#e4e4e8;"></div>
<div style="left:1081px;top:1075px;width:1px;height:81px;background:#e4e4e8;"></div>
<div style="left:1169px;top:1075px;width:1px;height:81px;background:#e4e4e8;"></div>
<div style="left:1219px;top:1075px;width:1px;height:81px;background:#e4e4e8;"></div>
<div style="left:1269px;top:1075px;width:1px;height:81px;background:#e4e4e8;"></div>
<div style="left:674px;top:1156px;width:706px;height:1px;background:#777;"></div>
<div style="left:1379px;top:1016px;width:1px;height:141px;background:#777;"></div>
<div style="left:1925px;top:961px;width:32px;height:22px;background:#000;"></div>
<div style="left:1932px;top:964.0px;height:16px;line-height:16px;font-size:11.5px;color:#fff;font-weight:normal;white-space:nowrap;">Form</div>
<div style="left:1925px;top:1002px;width:32px;height:315px;border:1px solid #c8c8c8;border-right:none;"></div>
<div style="left:1918px;top:1320px;width:39px;height:1px;background:#444;"></div>
<svg style="left:1942px;top:1108px;" width="16" height="14" viewBox="0 0 16 14"><path d="M1 7 L14 7 M8 1.5 L14 7 L8 12.5" fill="none" stroke="#808080" stroke-width="1.8"/></svg>
<div style="left:31px;top:1327px;width:122px;height:2px;background:#111;"></div>
<div style="left:209px;top:1327px;width:1748px;height:2px;background:#111;"></div>
<div style="left:153px;top:1349px;width:57px;height:2px;background:#111;"></div>
<div style="left:209px;top:1327px;width:2px;height:24px;background:#111;"></div>
<div style="left:44px;top:1332.0px;height:16px;line-height:16px;font-size:11.5px;color:#222;font-weight:normal;white-space:nowrap;letter-spacing:-0.3px;">Descriptions / Notes</div>
<div style="left:161px;top:1332.0px;height:16px;line-height:16px;font-size:11.5px;color:#555;font-weight:normal;white-space:nowrap;">Settings</div>
<div style="left:218px;top:1332.0px;height:16px;line-height:16px;font-size:11.5px;color:#222;font-weight:normal;white-space:nowrap;letter-spacing:-0.2px;">Cost price</div>
<div style="left:284px;top:1331.0px;height:18px;line-height:18px;font-size:13px;color:#e01010;font-weight:bold;white-space:nowrap;">!!</div>
<div style="left:306px;top:1332.0px;height:16px;line-height:16px;font-size:11.5px;color:#222;font-weight:normal;white-space:nowrap;letter-spacing:-0.2px;">Error / Improvements</div>
<div style="left:431px;top:1332.0px;height:16px;line-height:16px;font-size:11.5px;color:#222;font-weight:normal;white-space:nowrap;">Summary</div>
<div style="left:495px;top:1332.0px;height:16px;line-height:16px;font-size:11.5px;color:#222;font-weight:normal;white-space:nowrap;">Usage</div>
<div style="left:275px;top:1331px;width:1px;height:22px;background:#555;"></div>
<div style="left:421px;top:1331px;width:1px;height:22px;background:#555;"></div>
<div style="left:486px;top:1331px;width:1px;height:22px;background:#555;"></div>
<div style="left:533px;top:1331px;width:1px;height:22px;background:#555;"></div>
<div style="left:5px;top:1353px;width:1952px;height:6px;background:#fff;"></div>
<div style="left:5px;top:1353px;width:1952px;height:1px;background:#dcdcdc;"></div>
<div style="left:7px;top:1355px;width:199px;height:4px;background:#f0f0f0;border-top:1px solid #c8c8c8;border-left:1px solid #c8c8c8;"></div>
<div style="left:208px;top:1355px;width:172px;height:4px;background:#f0f0f0;border-top:1px solid #c8c8c8;border-left:1px solid #c8c8c8;"></div>
<div style="left:383px;top:1355px;width:1574px;height:4px;background:#f0f0f0;border-top:1px solid #c8c8c8;border-left:1px solid #c8c8c8;"></div>
<div style="left:1065px;top:625px;width:439px;height:159px;background:#f0f0f0;border:1px solid #0a73c8;box-shadow:0 1px 4px rgba(0,0,0,0.22);"></div>
<div style="left:1066px;top:668px;width:437px;height:115px;border:1px solid #fffaf2;border-top:none;"></div>
<div style="left:1065px;top:625px;width:439px;height:43px;background:#222a36;"></div>
<div style="left:1077px;top:637.5px;height:19px;line-height:19px;font-size:14px;color:#fff;font-weight:normal;white-space:nowrap;letter-spacing:-0.1px;">End editing</div>
<svg style="left:1474px;top:640px;" width="12" height="12" viewBox="0 0 12 12"><path d="M0.5 0.5 L11.5 11.5 M11.5 0.5 L0.5 11.5" stroke="#454c58" stroke-width="1.2"/></svg>
<svg style="left:1098px;top:688px;" width="31" height="31" viewBox="0 0 31 31"><defs><radialGradient id="qg" cx="40%" cy="35%" r="70%"><stop offset="0" stop-color="#2a8ae8"/><stop offset="1" stop-color="#0a56b0"/></radialGradient></defs><circle cx="15.5" cy="15.5" r="15" fill="url(#qg)"/><text x="15.5" y="25" text-anchor="middle" font-size="24" font-family="Liberation Sans" fill="#fff">?</text></svg>
<div style="left:1139px;top:696.0px;height:16px;line-height:16px;font-size:11.5px;color:#222;font-weight:normal;white-space:nowrap;letter-spacing:-0.25px;">Do you want to end the modification of item Drainage and sub-items?</div>
<div style="left:1206px;top:748px;width:75px;height:23px;background:#ececec;border:1px solid #adadad;"></div>
<div style="left:1213.0px;top:751.5px;width:60px;text-align:center;height:16px;line-height:16px;font-size:11.5px;color:#222;font-weight:normal;white-space:nowrap;"><u>Y</u>es</div>
<div style="left:1287px;top:748px;width:75px;height:23px;background:#ececec;border:1px solid #333;"></div>
<div style="left:1289px;top:750px;width:71px;height:19px;border:1px dotted #222;"></div>
<div style="left:1294.0px;top:751.5px;width:60px;text-align:center;height:16px;line-height:16px;font-size:11.5px;color:#222;font-weight:normal;white-space:nowrap;"><u>N</u>o</div>
<svg style="left:1175px;top:732px;" width="126" height="56" viewBox="0 0 126 56"><defs><filter id="sh" x="-20%" y="-20%" width="140%" height="160%"><feGaussianBlur stdDeviation="1.6"/></filter></defs><ellipse cx="63" cy="30" rx="56" ry="22" fill="none" stroke="#000" stroke-opacity="0.35" stroke-width="3" filter="url(#sh)"/><ellipse cx="62" cy="27.5" rx="55.5" ry="22" fill="none" stroke="#8c1c1c" stroke-width="2.8"/></svg>
</body></html>
